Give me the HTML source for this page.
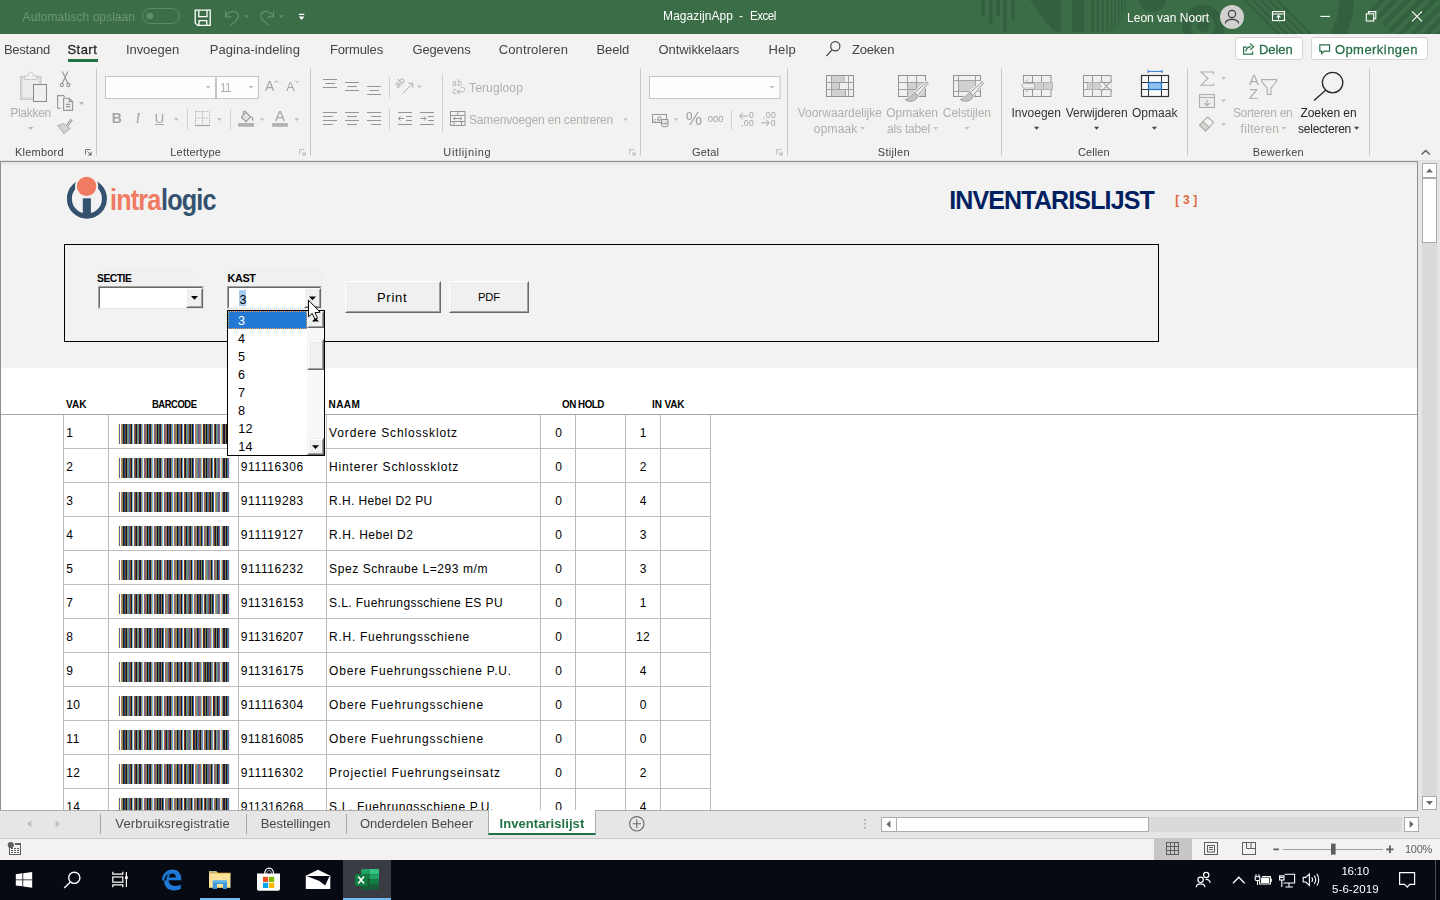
<!DOCTYPE html>
<html lang="nl">
<head>
<meta charset="utf-8">
<title>MagazijnApp - Excel</title>
<style>
html,body{margin:0;padding:0;}
body{width:1440px;height:900px;overflow:hidden;position:relative;background:#f3f2f1;font-family:"Liberation Sans",sans-serif;color:#000;}
.a{position:absolute;}
.t{position:absolute;white-space:pre;line-height:1;font-family:"Liberation Sans",sans-serif;}
svg{position:absolute;overflow:visible;}
.gl{left:0;top:0;width:1440px;height:900px;will-change:transform;pointer-events:none;}
</style>
</head>
<body>
<!-- ===== TITLE BAR ===== -->
<div class="a" style="left:0;top:0;width:1440px;height:34px;background:#3b6e47;overflow:hidden">
<svg width="1440" height="34" viewBox="0 0 1440 34" style="left:0;top:0">
 <defs><clipPath id="tbc"><circle cx="1091" cy="0" r="36.5"/></clipPath><clipPath id="tbr"><path d="M1358 0H1440V34H1392Z"/></clipPath></defs>
 <g fill="#33603f">
  <rect x="981.5" y="0" width="3.5" height="16"/><rect x="989" y="0" width="3.5" height="23"/>
  <rect x="996.5" y="0" width="3.5" height="16"/><rect x="1003" y="0" width="4" height="32"/>
  <rect x="1011" y="0" width="3.7" height="20"/>
  <path d="M1030 0 L1048 25 L1048 0 Z"/>
  <path d="M1048 0 H1061 V32 H1058 Q1049 30 1048 22 Z"/>
  <rect x="1071.7" y="0" width="12.5" height="32"/>
  <g clip-path="url(#tbc)"><path d="M1091 0h3v32h-3z M1096.3 0h2.8v32h-2.8z M1101.8 0h2.2v32h-2.2z M1106.4 0h2v32h-2z M1110.5 0h1.8v32h-1.8z M1114.3 0h1.7v32h-1.7z M1117.8 0h1.6v32h-1.6z M1121.2 0h1.5v32h-1.5z M1124.4 0h1.4v32h-1.4z M1127.2 0h1.2v32h-1.2z"/></g>
  <circle cx="1152.5" cy="-2" r="14"/>
  <circle cx="1203" cy="26" r="16.5" fill="none" stroke="#33603f" stroke-width="9"/>
  <circle cx="1203" cy="26" r="6"/>
  <path d="M1243 0h3.6l34 34h-3.6z M1251 0h3.6l34 34h-3.6z M1259 0h3.6l34 34h-3.6z M1267 0h3.6l34 34h-3.6z M1275 0h3.6l34 34h-3.6z "/>
  <path d="M1339.3 0H1354A76.6 76.6 0 0 1 1347 32V34H1329.6A61.9 61.9 0 0 0 1339.3 0Z"/>
  <g clip-path="url(#tbr)"><path d="M1379 0h6.5l-34 34h-6.5z M1392 0h6.5l-34 34h-6.5z M1405 0h6.5l-34 34h-6.5z M1418 0h6.5l-34 34h-6.5z M1431 0h6.5l-34 34h-6.5z M1444 0h6.5l-34 34h-6.5z M1457 0h6.5l-34 34h-6.5z M1470 0h6.5l-34 34h-6.5z "/></g>
 </g>
 <!-- autosave toggle -->
 <rect x="142.5" y="8.5" width="37" height="15" rx="7.5" fill="none" stroke="#5c8b68" stroke-width="1"/>
 <circle cx="150" cy="16" r="3.3" fill="#5f8d6b"/>
 <!-- save -->
 <g fill="none" stroke="#fff" stroke-width="1.3">
  <path d="M195.2 10.2 H210.2 V25.4 H197.6 L195.2 23 Z"/>
  <path d="M198.8 10.2 V16.6 H207 V10.2"/>
  <path d="M199 25.4 V20.6 H206.8 V25.4"/>
 </g>
 <!-- undo -->
 <g fill="none" stroke="#628f6e" stroke-width="1.2">
  <path d="M225.6 10.8 V16.8 H231.6"/>
  <path d="M225.8 16.6 C228 11 236 9.5 238.2 14.5 C239.6 18.5 235 21.5 230.4 25.6"/>
  <path d="M273.6 10.8 V16.8 H267.6"/>
  <path d="M273.4 16.6 C271.2 11 263.2 9.5 261 14.5 C259.6 18.5 264.2 21.5 268.8 25.6"/>
 </g>
 <path d="M244 15.2 h4.8 l-2.4 2.8z M279 15.2 h4.8 l-2.4 2.8z" fill="#628f6e"/>
 <!-- customize QAT -->
 <path d="M298.9 13.8 h5.4 v1.1 h-5.4z M298.7 16.6 h5.8 l-2.9 3.4z" fill="#fff"/>
 <!-- avatar -->
 <circle cx="1232" cy="17" r="12" fill="#d2d0ce"/>
 <g fill="none" stroke="#3b3a39" stroke-width="1.1">
  <circle cx="1232" cy="14" r="3.6"/>
  <path d="M1225.4 23.5 C1226 18 1238 18 1238.6 23.5"/>
 </g>
 <!-- ribbon display options -->
 <g fill="none" stroke="#fff" stroke-width="1.1">
  <rect x="1272.5" y="11.6" width="12" height="9"/>
  <path d="M1272.5 14 H1284.5"/>
  <path d="M1278.5 19.5 V15.6 M1276.6 17.4 L1278.5 15.5 L1280.4 17.4"/>
  <!-- minimize -->
  <path d="M1320.4 16.4 H1330"/>
  <!-- restore -->
  <rect x="1366.3" y="13.8" width="7.4" height="7.2"/>
  <path d="M1368.6 13.8 V11.6 H1375.8 V18.8 H1373.7"/>
  <!-- close -->
  <path d="M1412 11.4 L1422 21.4 M1422 11.4 L1412 21.4"/>
 </g>
</svg>
<div class="a gl">
<span class="t" style="left:22.62px;top:11.00px;font-size:12px;letter-spacing:0.055px;color:#6d9878;">Automatisch opslaan</span>
<span class="t" style="left:663.12px;top:10.00px;font-size:12px;letter-spacing:0.035px;color:#fff;">MagazijnApp</span>
<span class="t" style="left:739.12px;top:10.00px;font-size:12px;letter-spacing:0.560px;color:#fff;">-</span>
<span class="t" style="left:750.22px;top:10.00px;font-size:12px;letter-spacing:-0.540px;transform:scaleX(0.9668);transform-origin:0 0;color:#fff;">Excel</span>
<span class="t" style="left:1127.02px;top:12.00px;font-size:12px;letter-spacing:0.007px;color:#fff;">Leon van Noort</span>
</div>
</div>
<!-- ===== RIBBON ===== -->
<div class="a" style="left:0;top:34px;width:1440px;height:127px;background:#f3f2f1"></div>
<div class="a" style="left:0;top:160px;width:1440px;height:1px;background:#e3e1df"></div>
<div class="a" style="left:68px;top:59px;width:30px;height:3px;background:#217346"></div>
<div class="a" style="left:1235px;top:37px;width:68px;height:23px;background:#fff;border:1px solid #d6d4d2;border-radius:3px;box-sizing:border-box"></div>
<div class="a" style="left:1311px;top:37px;width:117px;height:23px;background:#fff;border:1px solid #d6d4d2;border-radius:3px;box-sizing:border-box"></div>
<div class="a gl">
<span class="t" style="left:3.88px;top:43.00px;font-size:13px;letter-spacing:-0.238px;color:#444;">Bestand</span>
<span class="t" style="left:67.48px;top:43.00px;font-size:13px;letter-spacing:0.454px;color:#262626;-webkit-text-stroke:0.3px #262626;">Start</span>
<span class="t" style="left:125.88px;top:43.00px;font-size:13px;letter-spacing:-0.033px;color:#444;">Invoegen</span>
<span class="t" style="left:209.78px;top:43.00px;font-size:13px;letter-spacing:0.034px;color:#444;">Pagina-indeling</span>
<span class="t" style="left:329.98px;top:43.00px;font-size:13px;letter-spacing:-0.143px;color:#444;">Formules</span>
<span class="t" style="left:412.48px;top:43.00px;font-size:13px;letter-spacing:-0.153px;color:#444;">Gegevens</span>
<span class="t" style="left:498.68px;top:43.00px;font-size:13px;letter-spacing:0.128px;color:#444;">Controleren</span>
<span class="t" style="left:596.48px;top:43.00px;font-size:13px;letter-spacing:-0.122px;color:#444;">Beeld</span>
<span class="t" style="left:658.48px;top:43.00px;font-size:13px;letter-spacing:-0.062px;color:#444;">Ontwikkelaars</span>
<span class="t" style="left:768.48px;top:43.00px;font-size:13px;letter-spacing:0.197px;color:#444;">Help</span>
<span class="t" style="left:851.98px;top:43.00px;font-size:13px;letter-spacing:-0.189px;color:#444;">Zoeken</span>
<span class="t" style="left:1258.88px;top:43.00px;font-size:13px;letter-spacing:-0.006px;color:#2b7048;-webkit-text-stroke:0.3px #2b7048;">Delen</span>
<span class="t" style="left:1334.88px;top:43.00px;font-size:13px;letter-spacing:0.454px;color:#2b7048;-webkit-text-stroke:0.3px #2b7048;">Opmerkingen</span>
</div>
<!-- group labels -->
<div class="a gl">
<span class="t" style="left:15.06px;top:147.00px;font-size:11px;letter-spacing:0.200px;color:#444;">Klembord</span>
<span class="t" style="left:170.26px;top:147.00px;font-size:11px;letter-spacing:0.196px;color:#444;">Lettertype</span>
<span class="t" style="left:443.36px;top:147.00px;font-size:11px;letter-spacing:0.630px;color:#444;">Uitlijning</span>
<span class="t" style="left:692.06px;top:147.00px;font-size:11px;letter-spacing:0.177px;color:#444;">Getal</span>
<span class="t" style="left:877.86px;top:147.00px;font-size:11px;letter-spacing:0.302px;color:#444;">Stijlen</span>
<span class="t" style="left:1077.96px;top:147.00px;font-size:11px;letter-spacing:0.115px;color:#444;">Cellen</span>
<span class="t" style="left:1252.76px;top:147.00px;font-size:11px;letter-spacing:0.295px;color:#444;">Bewerken</span>
</div>
<!-- button labels -->
<div class="a gl">
<span class="t" style="left:10.32px;top:107.00px;font-size:12px;letter-spacing:-0.306px;color:#b1afad;">Plakken</span>
<span class="t" style="left:469.02px;top:82.00px;font-size:12px;letter-spacing:0.138px;color:#b1afad;">Terugloop</span>
<span class="t" style="left:469.02px;top:114.00px;font-size:12px;letter-spacing:-0.173px;color:#b1afad;">Samenvoegen en centreren</span>
<span class="t" style="left:797.82px;top:107.00px;font-size:12px;letter-spacing:-0.051px;color:#b1afad;">Voorwaardelijke</span>
<span class="t" style="left:813.82px;top:123.00px;font-size:12px;letter-spacing:0.159px;color:#b1afad;">opmaak</span>
<span class="t" style="left:886.32px;top:107.00px;font-size:12px;letter-spacing:-0.053px;color:#b1afad;">Opmaken</span>
<span class="t" style="left:887.02px;top:123.00px;font-size:12px;letter-spacing:-0.194px;color:#b1afad;">als tabel</span>
<span class="t" style="left:942.82px;top:107.00px;font-size:12px;letter-spacing:-0.053px;color:#b1afad;">Celstijlen</span>
<span class="t" style="left:1011.52px;top:107.00px;font-size:12px;letter-spacing:0.009px;color:#333;">Invoegen</span>
<span class="t" style="left:1065.82px;top:107.00px;font-size:12px;letter-spacing:-0.095px;color:#333;">Verwijderen</span>
<span class="t" style="left:1131.92px;top:107.00px;font-size:12px;letter-spacing:0.033px;color:#333;">Opmaak</span>
<span class="t" style="left:1232.92px;top:107.00px;font-size:12px;letter-spacing:-0.287px;color:#b1afad;">Sorteren en</span>
<span class="t" style="left:1240.52px;top:123.00px;font-size:12px;letter-spacing:0.329px;color:#b1afad;">filteren</span>
<span class="t" style="left:1300.52px;top:107.00px;font-size:12px;letter-spacing:-0.084px;color:#262626;">Zoeken en</span>
<span class="t" style="left:1298.02px;top:123.00px;font-size:12px;letter-spacing:-0.232px;color:#262626;">selecteren</span>
</div>
<!-- font group glyph buttons -->
<div class="a gl">
<span class="t" style="left:111.84px;top:111.00px;font-size:14px;letter-spacing:-1.205px;color:#a6a4a2;font-weight:bold;">B</span>
<span class="t" style="left:135.44px;top:112.00px;font-size:14px;letter-spacing:1.448px;color:#a6a4a2;font-style:italic;font-family:Liberation Serif,serif;">I</span>
<span class="t" style="left:154.68px;top:112.00px;font-size:13px;letter-spacing:0.049px;color:#a6a4a2;">U</span>
<span class="t" style="left:265.04px;top:79.00px;font-size:14px;letter-spacing:0.676px;color:#a6a4a2;">A</span>
<span class="t" style="left:286.30px;top:81.00px;font-size:12.5px;letter-spacing:0.456px;color:#a6a4a2;">A</span>
<span class="t" style="left:275.00px;top:108.00px;font-size:15px;letter-spacing:0.984px;color:#a6a4a2;">A</span>
<span class="t" style="left:685.66px;top:110.00px;font-size:18.5px;letter-spacing:0.227px;color:#a6a4a2;">%</span>
<span class="t" style="left:707.82px;top:114.00px;font-size:9.4px;letter-spacing:0.065px;color:#a6a4a2;">000</span>
</div>
<svg width="1440" height="165" viewBox="0 0 1440 165" style="left:0;top:0">
 <!-- group separators -->
 <g stroke="#c8c6c4" stroke-width="1" fill="none">
  <path d="M96.5 68.5V155.5 M310.5 68.5V155.5 M640.5 68.5V155.5 M787.5 68.5V155.5 M1001.5 68.5V155.5 M1187.5 68.5V155.5 M1369.5 68.5V155.5"/>
  <path d="M187.5 109V129.5 M230.5 109V129.5 M389.5 77V97.5 M389.5 109V129.5 M442.5 74.5V132.5 M731.5 109.5V129.5" stroke="#d2d0ce"/>
 </g>
 <!-- dialog launchers -->
 <path d="M85.5 154.5V149.5H90.5 M87.4 151.4L90 154" stroke="#7a7876" stroke-width="1" fill="none"/><path d="M91.6 151.6V155.6H87.6Z" fill="#7a7876"/><path d="M299.5 154.5V149.5H304.5 M301.4 151.4L304 154" stroke="#c2c0be" stroke-width="1" fill="none"/><path d="M305.6 151.6V155.6H301.6Z" fill="#c2c0be"/><path d="M629.5 154.5V149.5H634.5 M631.4 151.4L634 154" stroke="#c2c0be" stroke-width="1" fill="none"/><path d="M635.6 151.6V155.6H631.6Z" fill="#c2c0be"/><path d="M776.5 154.5V149.5H781.5 M778.4 151.4L781 154" stroke="#c2c0be" stroke-width="1" fill="none"/><path d="M782.6 151.6V155.6H778.6Z" fill="#c2c0be"/>
 <!-- search icon (tab row) -->
 <g stroke="#444" stroke-width="1.2" fill="none"><circle cx="835.3" cy="46.2" r="4.6"/><path d="M832 49.8L826.4 56"/></g>
 <!-- share + comment icons -->
 <g stroke="#2b7048" stroke-width="1.2" fill="none">
  <path d="M1246.8 47.2H1243.6V54.2H1252.6V51.4"/>
  <path d="M1245.8 51.6C1246.2 48.4 1248.4 46.8 1251 46.6 M1250.2 43.8L1253.6 46.8L1250.2 49.8"/>
  <path d="M1319.8 44.8H1329.6V51.2H1324.2L1321.6 53.6V51.2H1319.8Z"/>
 </g>
 <!-- collapse ribbon caret -->
 <path d="M1421.6 154.6L1425.7 150.4L1429.8 154.6" stroke="#605e5c" stroke-width="1.4" fill="none"/>

 <!-- ===== Klembord ===== -->
 <rect x="20.5" y="76.5" width="20.5" height="23" fill="#dedede" stroke="#c6c6c6"/>
 <rect x="23" y="79" width="15.5" height="18" fill="#ededed"/>
 <path d="M24.5 79.5V76H28C28 70.8 33.5 70.8 33.5 76H36.8V79.5Z" fill="#f3f2f1" stroke="#c6c6c6"/>
 <rect x="33.5" y="84.5" width="13" height="17" fill="#efefef" stroke="#8a8886"/>
 <path d="M28.2 127h5l-2.5 2.9z M79 102h5l-2.5 2.9z" fill="#b8b6b4"/>
 <g stroke="#979593" stroke-width="1.1" fill="none">
  <path d="M62.4 71.6L68 83.6 M67.8 71.6L62.2 83.6"/><circle cx="61.8" cy="85" r="1.6"/><circle cx="68.4" cy="85" r="1.6"/>
  <path d="M61 108.3H57.6V95.6H63.6L64.8 96.8" />
  <path d="M63.6 98.2H69.2L72.6 101.6V110.4H63.6Z" fill="#efefef"/><path d="M69.2 98.2V101.6H72.6 M66 104.4H70.4 M66 106.6H70.4"/>
  <path d="M71.6 119.4L67 126" stroke-width="2.6" stroke="#8a8886"/><path d="M71.6 119.4L67 126" stroke-width="1" stroke="#f3f2f1"/>
  <path d="M63.4 123.6L70 128.2L64 133.4L57.8 125.6Z" fill="#d6d4d2" stroke="#b8b6b4"/>
 </g>

 <!-- ===== Lettertype ===== -->
 <rect x="105.5" y="76.5" width="110" height="22" fill="#fdfdfd" stroke="#c8c6c4"/>
 <rect x="216.5" y="76.5" width="42" height="22" fill="#fdfdfd" stroke="#c8c6c4"/>
 <path d="M205.8 86h4.8l-2.4 2.7z M248.6 86h4.8l-2.4 2.7z M173.8 118.2h4.8l-2.4 2.7z M216.9 118.2h4.8l-2.4 2.7z M259.8 118.2h4.8l-2.4 2.7z M294.3 118.2h4.8l-2.4 2.7z" fill="#c2c0be"/>
 <path d="M274.6 82.6L276.4 80.8L278.2 82.6 M295.4 80.8L297.2 82.6L299 80.8" stroke="#a6a4a2" stroke-width="1" fill="none"/>
 <path d="M155 124.5H164" stroke="#a6a4a2" stroke-width="1"/>
 <g stroke="#b8b6b4" stroke-width="1" fill="none" stroke-dasharray="1.5 1.2"><path d="M195.5 111.5H209.5 M195.5 111.5V124 M209.5 111.5V124 M202.5 111.5V124 M195.5 118H209.5"/></g>
 <path d="M195 125.5H210" stroke="#a6a4a2" stroke-width="1.2"/>
 <rect x="238.2" y="123" width="15.8" height="3.8" fill="#b4b2b0"/>
 <rect x="272.2" y="123" width="15.6" height="3.8" fill="#b4b2b0"/>
 <g stroke="#979593" stroke-width="1.1" fill="none"><path d="M241.4 117.2L246 112.2L250.6 116.8L246 121.6Z" fill="#e6e4e2"/><path d="M243.4 114.6V112C243.4 110.6 245.6 110.6 245.6 112 M251.4 116.6C253 118.4 253 119.6 252.2 120.6"/></g>

 <!-- ===== Uitlijning ===== -->
 <g stroke="#979593" stroke-width="1" fill="none">
  <path d="M323 79.5H337 M325.5 83.5H335 M323 87.5H337"/>
  <path d="M345 82.5H359 M347.5 86.5H357 M345 90.5H359"/>
  <path d="M367 86.5H381 M369.5 90.5H379 M367 94.5H381"/>
  <path d="M323 112.5H337 M323 116.5H333 M323 120.5H337 M323 124.5H333"/>
  <path d="M345 112.5H359 M347 116.5H357 M345 120.5H359 M347 124.5H357"/>
  <path d="M367 112.5H381 M371 116.5H381 M367 120.5H381 M371 124.5H381"/>
  <path d="M398 112.5H412 M406 116.5H412 M406 120.5H412 M398 124.5H412 M404 118.5H398.4 M400.6 116.3L398.4 118.5L400.6 120.7"/>
  <path d="M420 112.5H434 M428 116.5H434 M428 120.5H434 M420 124.5H434 M420.4 118.5H426 M423.8 116.3L426 118.5L423.8 120.7"/>
  <path d="M402.8 93.4L412.6 83.4 M408.4 83.2H412.8V87.6" stroke="#b1afad"/>
  <rect x="450.5" y="111.5" width="14.5" height="14"/><path d="M450.5 115.5H465 M450.5 121.5H465 M457.8 111.5V115.5 M454 121.5V125.5 M461.4 121.5V125.5 M453.4 118.5H462 M455.2 116.8L453.4 118.5L455.2 120.2 M460.2 116.8L462 118.5L460.2 120.2"/>
  <path d="M457.4 91.8H462.4C465.6 91.8 465.6 87.4 462.4 87.4H460.8 M459.6 89.6L457.2 91.8L459.6 94" stroke="#b1afad"/>
 </g>
 <path d="M417 85.6h4.8l-2.4 2.7z M623.2 118.2h4.8l-2.4 2.7z" fill="#c2c0be"/>

 <!-- ===== Getal ===== -->
 <rect x="649.5" y="76.5" width="130.5" height="22" fill="#fdfdfd" stroke="#c8c6c4"/>
 <path d="M769.6 86h4.8l-2.4 2.7z M673.8 118.2h4.8l-2.4 2.7z" fill="#c2c0be"/>
 <g stroke="#979593" stroke-width="1" fill="none">
  <rect x="652.5" y="114.5" width="14" height="8"/><circle cx="659.5" cy="118.5" r="1.8"/>
  <path d="M661.5 119.5H668V125.4C668 127.4 661.5 127.4 661.5 125.4Z" fill="#e6e4e2"/><path d="M661.5 122.4C661.5 124 668 124 668 122.4"/>
  <path d="M747.8 116H739.6 M742.8 112.8L739.6 116L742.8 119.2" stroke="#a6a4a2"/>
  <path d="M761 122.8H769.2 M766 119.6L769.2 122.8L766 126" stroke="#a6a4a2"/>
 </g>

 <!-- ===== Stijlen ===== -->
 <g stroke="#939190" stroke-width="1" fill="none">
  <rect x="826.5" y="75.5" width="27" height="21" fill="#f0f0f0"/>
  <path d="M831.8 76H843.2V82H831.8Z M831.8 83H839.4V89H831.8Z M831.8 90H845.2V96H831.8Z" fill="#d2d0ce" stroke="none"/>
  <path d="M831.5 75.5V96.5 M848.5 75.5V96.5 M844 75.5V82.5 M845.5 89.5V96.5 M826.5 82.5H853.5 M826.5 89.5H853.5 M839.5 82.5V89.5" stroke="#a3a1a0"/>
  <rect x="898.5" y="75.5" width="27" height="21" fill="#f0f0f0"/>
  <path d="M908 83H925V96H908Z" fill="#d2d0ce" stroke="none"/>
  <path d="M907.5 75.5V96.5 M916.5 75.5V96.5 M898.5 82.5H925.5 M898.5 89.5H925.5" stroke="#a3a1a0"/>
  <rect x="953.5" y="75.5" width="27" height="21" fill="#f0f0f0"/>
  <path d="M959 80.5H975.5V91H959Z" fill="#d2d0ce" stroke="none"/>
  <path d="M958.5 75.5V96.5 M975.5 75.5V96.5 M953.5 80.5H980.5 M953.5 91.5H980.5" stroke="#a3a1a0"/>
 </g>
 <g>
  <path d="M926.9 81.8L928.3 83.1L917.7 95.7L914.7 92.8Z" fill="none" stroke="#f3f2f1" stroke-width="2.6" stroke-linejoin="round"/>
  <path d="M914.6 92.8C911.5 93.5 911.5 98 905.2 99.6C909 102.6 916.6 102 917.9 95.6Z" fill="none" stroke="#f3f2f1" stroke-width="2.2"/>
  <path d="M926.9 81.8L928.3 83.1L917.7 95.7L914.7 92.8Z" fill="#ededed" stroke="#8f8d8b" stroke-width="0.9" stroke-linejoin="round"/>
  <path d="M914.6 92.8C911.5 93.5 911.5 98 905.2 99.6C909 102.6 916.6 102 917.9 95.6Z" fill="#c6c4c2" stroke="#9a9896" stroke-width="0.9"/>
  <g transform="translate(55.2 0)"><path d="M926.9 81.8L928.3 83.1L917.7 95.7L914.7 92.8Z" fill="none" stroke="#f3f2f1" stroke-width="2.6" stroke-linejoin="round"/>
  <path d="M914.6 92.8C911.5 93.5 911.5 98 905.2 99.6C909 102.6 916.6 102 917.9 95.6Z" fill="none" stroke="#f3f2f1" stroke-width="2.2"/>
  <path d="M926.9 81.8L928.3 83.1L917.7 95.7L914.7 92.8Z" fill="#ededed" stroke="#8f8d8b" stroke-width="0.9" stroke-linejoin="round"/>
  <path d="M914.6 92.8C911.5 93.5 911.5 98 905.2 99.6C909 102.6 916.6 102 917.9 95.6Z" fill="#c6c4c2" stroke="#9a9896" stroke-width="0.9"/></g>
 </g>
 <path d="M860.2 127h4.8l-2.4 2.7z M933.2 127h4.8l-2.4 2.7z M964.6 127h4.8l-2.4 2.7z M1281.2 127h4.8l-2.4 2.7z M1221.2 77h4.8l-2.4 2.7z M1221.2 99.6h4.8l-2.4 2.7z M1221.2 123.2h4.8l-2.4 2.7z" fill="#c2c0be"/>
 <path d="M1034 126.8h5.2l-2.6 3z M1094 126.8h5.2l-2.6 3z M1151.8 126.8h5.2l-2.6 3z M1354 126.8h5.2l-2.6 3z" fill="#444"/>

 <!-- ===== Cellen ===== -->
 <g stroke="#979593" stroke-width="1" fill="none">
  <rect x="1023.5" y="75.5" width="27.5" height="21" fill="#efefef"/>
  <path d="M1032.5 75.5V96.5 M1041.5 75.5V96.5 M1023.5 82.5H1051 M1023.5 89.5H1051"/>
  <rect x="1034.5" y="82.5" width="18" height="7" fill="#d2d0ce" stroke="#b8b6b4"/><path d="M1043.5 82.5V89.5" stroke="#b8b6b4"/>
  <path d="M1022.6 83H1034V89H1022.6Z" fill="#f3f2f1" stroke="none"/><path d="M1028 79.4L1021.6 85.8L1028 92.2 M1024.4 83.6H1034.4 M1024.4 88H1034.4" stroke="#c2c0be" stroke-width="1.2"/>
  <rect x="1083.5" y="75.5" width="27.5" height="21" fill="#efefef"/>
  <path d="M1092.5 75.5V82.5 M1101.5 75.5V82.5 M1092.5 89.5V96.5 M1101.5 89.5V96.5 M1083.5 82.5H1111 M1083.5 89.5H1111"/>
  <path d="M1084 83H1111.5V89H1084Z" fill="#f3f2f1" stroke="none"/>
  <path d="M1087.5 82.5H1098L1101.6 86L1098 89.5H1087.5Z" fill="#d2d0ce" stroke="#b8b6b4"/><path d="M1092.5 82.5V89.5" stroke="#b8b6b4"/>
  <path d="M1101 80.4L1112 91.8 M1112 80.4L1101 91.8" stroke="#aeacaa" stroke-width="1.3"/>
 </g>
 <rect x="1141.5" y="75.5" width="27" height="21" fill="#fafafa" stroke="#333" stroke-width="1.2"/>
 <path d="M1148.5 75.5V96.5 M1161.5 75.5V96.5 M1141.5 82.5H1168.5 M1141.5 89.5H1168.5" stroke="#333" stroke-width="1" fill="none"/>
 <rect x="1148.5" y="82.5" width="13" height="7" fill="#8ec2ec" stroke="#1e6fc0" stroke-width="1.2"/>
 <path d="M1148 71.4H1162.2 M1148.2 69.8V73 M1162 69.8V73" stroke="#2b7cd3" stroke-width="1" fill="none"/>

 <!-- ===== Bewerken ===== -->
 <g stroke="#a19f9d" stroke-width="1.1" fill="none">
  <path d="M1213.6 74V72H1201L1208 78.6L1201 85.2H1213.6V83.2" stroke="#b1afad"/>
  <rect x="1199.5" y="94.5" width="15" height="13" fill="#ececec" stroke="#b1afad"/><path d="M1199.5 97.5H1214.5 M1207 99.6V105.4 M1204.4 103L1207 105.6L1209.6 103" stroke="#b1afad"/>
  <path d="M1207.6 117L1213.8 122.6L1205.6 131L1199.6 125.2Z" fill="#f3f2f1" stroke="#b1afad"/><path d="M1203 121.6L1209.2 127.2L1205.6 131L1199.6 125.2Z" fill="#d6d4d2" stroke="#b1afad"/>
  <path d="M1261.6 79.6H1276.6V81.4L1271 88.2V94.4H1267.2V88.2L1261.6 81.4Z" stroke="#b1afad"/>
 </g>
 <g stroke="#262626" stroke-width="1.3" fill="none"><circle cx="1332.6" cy="82.6" r="10.2"/><path d="M1325.6 90.2L1314 100.6"/></g>
</svg>
<div class="a gl">
<span class="t" style="left:219.52px;top:82.00px;font-size:12px;letter-spacing:-0.540px;transform:scaleX(0.9624);transform-origin:0 0;color:#b1afad;">11</span>
<span class="t" style="left:1249.00px;top:72.00px;font-size:15px;letter-spacing:0.384px;color:#b1afad;">A</span>
<span class="t" style="left:1248.78px;top:86.00px;font-size:15.5px;letter-spacing:0.471px;color:#b1afad;">Z</span>
<span class="t" style="left:398.6px;top:80.2px;font-size:9.5px;color:#a6a4a2;transform:rotate(-45deg);transform-origin:0 100%;">ab</span>
<span class="t" style="left:452.06px;top:79.00px;font-size:8.5px;letter-spacing:0.406px;color:#b1afad;">ab</span>
<span class="t" style="left:452.46px;top:87.00px;font-size:8.5px;letter-spacing:0.630px;color:#b1afad;">c</span>
<span class="t" style="left:653.36px;top:117.00px;font-size:6px;letter-spacing:0.268px;color:#979593;">cn</span>
<span class="t" style="left:749.05px;top:111.00px;font-size:8.7px;letter-spacing:0.352px;color:#a6a4a2;">0</span>
<span class="t" style="left:741.05px;top:119.00px;font-size:8.7px;letter-spacing:0.373px;color:#a6a4a2;">,00</span>
<span class="t" style="left:762.85px;top:111.00px;font-size:8.7px;letter-spacing:0.406px;color:#a6a4a2;">,00</span>
<span class="t" style="left:770.85px;top:119.00px;font-size:8.7px;letter-spacing:0.452px;color:#a6a4a2;">0</span>
</div>
<!-- ===== SHEET ===== -->
<div class="a" style="left:0;top:161px;width:1440px;height:649px;background:#e6e6e6"></div>
<div class="a" id="sheet" style="left:0;top:161px;width:1418px;height:649px;background:#fff;overflow:hidden">
<div class="a" style="left:0;top:0;width:1418px;height:207px;background:#f2f2f2"></div>
<div class="a" style="left:0;top:1px;width:1418px;height:4px;background:linear-gradient(#e4e4e4,#f2f2f2)"></div>
</div>
<div class="a" style="left:0;top:0;width:1417px;height:810px;overflow:hidden">
<div class="a" style="left:1px;top:414px;width:1416px;height:1px;background:#a6a6a6"></div>
<div class="a" style="left:63px;top:415px;width:1px;height:395px;background:#bdbdbd"></div>
<div class="a" style="left:108px;top:415px;width:1px;height:395px;background:#bdbdbd"></div>
<div class="a" style="left:238px;top:415px;width:1px;height:395px;background:#bdbdbd"></div>
<div class="a" style="left:326px;top:415px;width:1px;height:395px;background:#bdbdbd"></div>
<div class="a" style="left:540px;top:415px;width:1px;height:395px;background:#bdbdbd"></div>
<div class="a" style="left:575px;top:415px;width:1px;height:395px;background:#bdbdbd"></div>
<div class="a" style="left:625px;top:415px;width:1px;height:395px;background:#bdbdbd"></div>
<div class="a" style="left:660px;top:415px;width:1px;height:395px;background:#bdbdbd"></div>
<div class="a" style="left:710px;top:415px;width:1px;height:395px;background:#bdbdbd"></div>
<div class="a" style="left:63px;top:448px;width:648px;height:1px;background:#bdbdbd"></div>
<div class="a" style="left:63px;top:482px;width:648px;height:1px;background:#bdbdbd"></div>
<div class="a" style="left:63px;top:516px;width:648px;height:1px;background:#bdbdbd"></div>
<div class="a" style="left:63px;top:550px;width:648px;height:1px;background:#bdbdbd"></div>
<div class="a" style="left:63px;top:584px;width:648px;height:1px;background:#bdbdbd"></div>
<div class="a" style="left:63px;top:618px;width:648px;height:1px;background:#bdbdbd"></div>
<div class="a" style="left:63px;top:652px;width:648px;height:1px;background:#bdbdbd"></div>
<div class="a" style="left:63px;top:686px;width:648px;height:1px;background:#bdbdbd"></div>
<div class="a" style="left:63px;top:720px;width:648px;height:1px;background:#bdbdbd"></div>
<div class="a" style="left:63px;top:754px;width:648px;height:1px;background:#bdbdbd"></div>
<div class="a" style="left:63px;top:788px;width:648px;height:1px;background:#bdbdbd"></div>
<span class="t" style="left:66.00px;top:400.00px;font-size:10px;letter-spacing:0.042px;font-weight:bold;color:#000;">VAK</span>
<span class="t" style="left:151.60px;top:400.00px;font-size:10px;letter-spacing:-0.450px;transform:scaleX(0.9407);transform-origin:0 0;font-weight:bold;color:#000;">BARCODE</span>
<span class="t" style="left:328.60px;top:400.00px;font-size:10px;letter-spacing:0.375px;font-weight:bold;color:#000;">NAAM</span>
<span class="t" style="left:561.80px;top:400.00px;font-size:10px;letter-spacing:-0.450px;transform:scaleX(0.9753);transform-origin:0 0;font-weight:bold;color:#000;">ON HOLD</span>
<span class="t" style="left:652.10px;top:400.00px;font-size:10px;letter-spacing:-0.159px;font-weight:bold;color:#000;">IN VAK</span>
<span class="t" style="left:66.22px;top:427.00px;font-size:12px;letter-spacing:0.372px;">1</span>
<svg width="1440" height="900" viewBox="0 0 1440 900" style="left:0;top:0" shape-rendering="crispEdges"><path fill="#fff0a8" d="M118 424h1v20h-1zM133 424h1v20h-1zM202 424h1v20h-1z"/><path fill="#6060a8" d="M119 424h1v20h-1z"/><path fill="#c09060" d="M121 424h1v20h-1z"/><path fill="#789060" d="M122 424h1v20h-1zM171 424h1v20h-1zM186 424h1v20h-1z"/><path fill="#301818" d="M123 424h1v20h-1z"/><path fill="#184890" d="M124 424h1v20h-1z"/><path fill="#784818" d="M125 424h1v20h-1zM130 424h1v20h-1zM135 424h1v20h-1zM209 424h1v20h-1z"/><path fill="#181830" d="M126 424h1v20h-1zM131 424h1v20h-1zM136 424h1v20h-1zM210 424h1v20h-1zM215 424h1v20h-1z"/><path fill="#789078" d="M127 424h1v20h-1zM137 424h1v20h-1zM211 424h1v20h-1zM216 424h1v20h-1z"/><path fill="#609090" d="M128 424h1v20h-1zM138 424h1v20h-1zM187 424h1v20h-1zM197 424h1v20h-1zM217 424h1v20h-1zM222 424h1v20h-1z"/><path fill="#606090" d="M129 424h1v20h-1zM134 424h1v20h-1zM198 424h1v20h-1zM208 424h1v20h-1zM218 424h1v20h-1z"/><path fill="#78c0f0" d="M132 424h1v20h-1zM142 424h1v20h-1zM152 424h1v20h-1zM162 424h1v20h-1z"/><path fill="#481818" d="M139 424h1v20h-1zM223 424h1v20h-1z"/><path fill="#181848" d="M140 424h1v20h-1zM150 424h1v20h-1zM160 424h1v20h-1zM170 424h1v20h-1zM185 424h1v20h-1zM190 424h1v20h-1zM224 424h1v20h-1z"/><path fill="#909060" d="M141 424h1v20h-1zM151 424h1v20h-1zM161 424h1v20h-1z"/><path fill="#fff0c0" d="M143 424h1v20h-1zM153 424h1v20h-1zM163 424h1v20h-1zM173 424h1v20h-1zM183 424h1v20h-1z"/><path fill="#786090" d="M144 424h1v20h-1zM154 424h1v20h-1zM164 424h1v20h-1zM228 424h1v20h-1z"/><path fill="#906060" d="M145 424h1v20h-1zM155 424h1v20h-1zM165 424h1v20h-1z"/><path fill="#907848" d="M146 424h1v20h-1zM156 424h1v20h-1zM166 424h1v20h-1zM225 424h1v20h-1z"/><path fill="#181818" d="M147 424h1v20h-1zM157 424h1v20h-1zM167 424h1v20h-1zM177 424h1v20h-1zM181 424h1v20h-1zM192 424h1v20h-1zM206 424h1v20h-1zM226 424h1v20h-1z"/><path fill="#307890" d="M148 424h1v20h-1zM158 424h1v20h-1zM227 424h1v20h-1z"/><path fill="#603018" d="M149 424h1v20h-1zM159 424h1v20h-1z"/><path fill="#306090" d="M168 424h1v20h-1zM178 424h1v20h-1z"/><path fill="#783018" d="M169 424h1v20h-1zM184 424h1v20h-1zM189 424h1v20h-1z"/><path fill="#60a8f0" d="M172 424h1v20h-1zM182 424h1v20h-1z"/><path fill="#906078" d="M174 424h1v20h-1zM199 424h1v20h-1zM219 424h1v20h-1z"/><path fill="#907860" d="M175 424h1v20h-1zM200 424h1v20h-1z"/><path fill="#909048" d="M176 424h1v20h-1z"/><path fill="#786078" d="M179 424h1v20h-1z"/><path fill="#906030" d="M180 424h1v20h-1z"/><path fill="#607890" d="M188 424h1v20h-1z"/><path fill="#789048" d="M191 424h1v20h-1z"/><path fill="#3060c0" d="M193 424h1v20h-1z"/><path fill="#c07860" d="M195 424h1v20h-1z"/><path fill="#909078" d="M196 424h1v20h-1z"/><path fill="#90c0f0" d="M201 424h1v20h-1z"/><path fill="#601818" d="M203 424h1v20h-1z"/><path fill="#183060" d="M204 424h1v20h-1z"/><path fill="#907830" d="M205 424h1v20h-1z"/><path fill="#487890" d="M207 424h1v20h-1z"/><path fill="#6090d8" d="M212 424h1v20h-1z"/><path fill="#f0f0d8" d="M213 424h1v20h-1z"/><path fill="#904818" d="M214 424h1v20h-1z"/><path fill="#c0f0ff" d="M220 424h1v20h-1z"/><path fill="#f0c078" d="M221 424h1v20h-1z"/><path fill="#d8f0ff" d="M229 424h1v20h-1z"/></svg>
<span class="t" style="left:329.12px;top:427.00px;font-size:12px;letter-spacing:0.840px;">Vordere Schlossklotz</span>
<span class="t" style="left:555.32px;top:427.00px;font-size:12px;letter-spacing:0.272px;">0</span>
<span class="t" style="left:639.72px;top:427.00px;font-size:12px;letter-spacing:0.272px;">1</span>
<span class="t" style="left:66.22px;top:461.00px;font-size:12px;letter-spacing:0.372px;">2</span>
<svg width="1440" height="900" viewBox="0 0 1440 900" style="left:0;top:0" shape-rendering="crispEdges"><path fill="#fff0a8" d="M118 458h1v20h-1zM133 458h1v20h-1zM202 458h1v20h-1z"/><path fill="#6060a8" d="M119 458h1v20h-1z"/><path fill="#c09060" d="M121 458h1v20h-1z"/><path fill="#789060" d="M122 458h1v20h-1zM171 458h1v20h-1zM186 458h1v20h-1z"/><path fill="#301818" d="M123 458h1v20h-1z"/><path fill="#184890" d="M124 458h1v20h-1z"/><path fill="#784818" d="M125 458h1v20h-1zM130 458h1v20h-1zM135 458h1v20h-1z"/><path fill="#181830" d="M126 458h1v20h-1zM131 458h1v20h-1zM136 458h1v20h-1zM215 458h1v20h-1z"/><path fill="#789078" d="M127 458h1v20h-1zM137 458h1v20h-1zM216 458h1v20h-1z"/><path fill="#609090" d="M128 458h1v20h-1zM138 458h1v20h-1zM187 458h1v20h-1zM197 458h1v20h-1zM217 458h1v20h-1zM222 458h1v20h-1z"/><path fill="#606090" d="M129 458h1v20h-1zM134 458h1v20h-1zM198 458h1v20h-1zM208 458h1v20h-1zM218 458h1v20h-1z"/><path fill="#78c0f0" d="M132 458h1v20h-1zM142 458h1v20h-1zM152 458h1v20h-1zM162 458h1v20h-1z"/><path fill="#481818" d="M139 458h1v20h-1zM223 458h1v20h-1z"/><path fill="#181848" d="M140 458h1v20h-1zM150 458h1v20h-1zM160 458h1v20h-1zM170 458h1v20h-1zM185 458h1v20h-1zM190 458h1v20h-1zM224 458h1v20h-1z"/><path fill="#909060" d="M141 458h1v20h-1zM151 458h1v20h-1zM161 458h1v20h-1z"/><path fill="#fff0c0" d="M143 458h1v20h-1zM153 458h1v20h-1zM163 458h1v20h-1zM173 458h1v20h-1zM183 458h1v20h-1z"/><path fill="#786090" d="M144 458h1v20h-1zM154 458h1v20h-1zM164 458h1v20h-1zM228 458h1v20h-1z"/><path fill="#906060" d="M145 458h1v20h-1zM155 458h1v20h-1zM165 458h1v20h-1z"/><path fill="#907848" d="M146 458h1v20h-1zM156 458h1v20h-1zM166 458h1v20h-1zM225 458h1v20h-1z"/><path fill="#181818" d="M147 458h1v20h-1zM157 458h1v20h-1zM167 458h1v20h-1zM177 458h1v20h-1zM181 458h1v20h-1zM192 458h1v20h-1zM206 458h1v20h-1zM211 458h1v20h-1zM226 458h1v20h-1z"/><path fill="#307890" d="M148 458h1v20h-1zM158 458h1v20h-1zM227 458h1v20h-1z"/><path fill="#603018" d="M149 458h1v20h-1zM159 458h1v20h-1z"/><path fill="#306090" d="M168 458h1v20h-1zM178 458h1v20h-1z"/><path fill="#783018" d="M169 458h1v20h-1zM184 458h1v20h-1zM189 458h1v20h-1z"/><path fill="#60a8f0" d="M172 458h1v20h-1zM182 458h1v20h-1z"/><path fill="#906078" d="M174 458h1v20h-1zM199 458h1v20h-1zM209 458h1v20h-1zM219 458h1v20h-1z"/><path fill="#907860" d="M175 458h1v20h-1zM200 458h1v20h-1z"/><path fill="#909048" d="M176 458h1v20h-1z"/><path fill="#786078" d="M179 458h1v20h-1z"/><path fill="#906030" d="M180 458h1v20h-1z"/><path fill="#607890" d="M188 458h1v20h-1z"/><path fill="#789048" d="M191 458h1v20h-1z"/><path fill="#3060c0" d="M193 458h1v20h-1z"/><path fill="#c07860" d="M195 458h1v20h-1z"/><path fill="#909078" d="M196 458h1v20h-1z"/><path fill="#90c0f0" d="M201 458h1v20h-1z"/><path fill="#601818" d="M203 458h1v20h-1z"/><path fill="#183060" d="M204 458h1v20h-1z"/><path fill="#907830" d="M205 458h1v20h-1zM210 458h1v20h-1z"/><path fill="#487890" d="M207 458h1v20h-1z"/><path fill="#4890d8" d="M212 458h1v20h-1z"/><path fill="#f0f0d8" d="M213 458h1v20h-1z"/><path fill="#904818" d="M214 458h1v20h-1z"/><path fill="#c0f0ff" d="M220 458h1v20h-1z"/><path fill="#f0c078" d="M221 458h1v20h-1z"/><path fill="#d8f0ff" d="M229 458h1v20h-1z"/></svg>
<span class="t" style="left:240.82px;top:461.00px;font-size:12px;letter-spacing:0.617px;">911116306</span>
<span class="t" style="left:329.12px;top:461.00px;font-size:12px;letter-spacing:0.826px;">Hinterer Schlossklotz</span>
<span class="t" style="left:555.32px;top:461.00px;font-size:12px;letter-spacing:0.272px;">0</span>
<span class="t" style="left:639.72px;top:461.00px;font-size:12px;letter-spacing:0.272px;">2</span>
<span class="t" style="left:66.22px;top:495.00px;font-size:12px;letter-spacing:0.372px;">3</span>
<svg width="1440" height="900" viewBox="0 0 1440 900" style="left:0;top:0" shape-rendering="crispEdges"><path fill="#fff0a8" d="M118 492h1v20h-1zM133 492h1v20h-1z"/><path fill="#6060a8" d="M119 492h1v20h-1z"/><path fill="#c09060" d="M121 492h1v20h-1zM215 492h1v20h-1z"/><path fill="#789060" d="M122 492h1v20h-1zM171 492h1v20h-1zM211 492h1v20h-1z"/><path fill="#301818" d="M123 492h1v20h-1zM197 492h1v20h-1zM212 492h1v20h-1z"/><path fill="#184890" d="M124 492h1v20h-1zM198 492h1v20h-1z"/><path fill="#784818" d="M125 492h1v20h-1zM130 492h1v20h-1zM135 492h1v20h-1zM199 492h1v20h-1zM209 492h1v20h-1z"/><path fill="#181830" d="M126 492h1v20h-1zM131 492h1v20h-1zM136 492h1v20h-1zM200 492h1v20h-1zM210 492h1v20h-1z"/><path fill="#789078" d="M127 492h1v20h-1zM137 492h1v20h-1zM201 492h1v20h-1zM216 492h1v20h-1z"/><path fill="#609090" d="M128 492h1v20h-1zM138 492h1v20h-1zM217 492h1v20h-1zM222 492h1v20h-1z"/><path fill="#606090" d="M129 492h1v20h-1zM134 492h1v20h-1zM208 492h1v20h-1zM218 492h1v20h-1z"/><path fill="#78c0f0" d="M132 492h1v20h-1zM142 492h1v20h-1zM152 492h1v20h-1zM162 492h1v20h-1z"/><path fill="#481818" d="M139 492h1v20h-1zM223 492h1v20h-1z"/><path fill="#181848" d="M140 492h1v20h-1zM150 492h1v20h-1zM160 492h1v20h-1zM170 492h1v20h-1zM224 492h1v20h-1z"/><path fill="#909060" d="M141 492h1v20h-1zM151 492h1v20h-1zM161 492h1v20h-1zM196 492h1v20h-1z"/><path fill="#fff0c0" d="M143 492h1v20h-1zM153 492h1v20h-1zM163 492h1v20h-1zM173 492h1v20h-1zM183 492h1v20h-1zM193 492h1v20h-1z"/><path fill="#786090" d="M144 492h1v20h-1zM154 492h1v20h-1zM164 492h1v20h-1zM228 492h1v20h-1z"/><path fill="#906060" d="M145 492h1v20h-1zM155 492h1v20h-1zM165 492h1v20h-1z"/><path fill="#907848" d="M146 492h1v20h-1zM156 492h1v20h-1zM166 492h1v20h-1zM225 492h1v20h-1z"/><path fill="#181818" d="M147 492h1v20h-1zM157 492h1v20h-1zM167 492h1v20h-1zM177 492h1v20h-1zM181 492h1v20h-1zM186 492h1v20h-1zM191 492h1v20h-1zM206 492h1v20h-1zM226 492h1v20h-1z"/><path fill="#307890" d="M148 492h1v20h-1zM158 492h1v20h-1zM227 492h1v20h-1z"/><path fill="#603018" d="M149 492h1v20h-1zM159 492h1v20h-1z"/><path fill="#306090" d="M168 492h1v20h-1zM178 492h1v20h-1z"/><path fill="#783018" d="M169 492h1v20h-1z"/><path fill="#60a8f0" d="M172 492h1v20h-1zM182 492h1v20h-1zM192 492h1v20h-1z"/><path fill="#906078" d="M174 492h1v20h-1zM184 492h1v20h-1zM194 492h1v20h-1zM204 492h1v20h-1zM219 492h1v20h-1z"/><path fill="#907860" d="M175 492h1v20h-1zM195 492h1v20h-1z"/><path fill="#909048" d="M176 492h1v20h-1z"/><path fill="#786078" d="M179 492h1v20h-1zM189 492h1v20h-1z"/><path fill="#906030" d="M180 492h1v20h-1zM185 492h1v20h-1zM190 492h1v20h-1z"/><path fill="#489090" d="M187 492h1v20h-1z"/><path fill="#607890" d="M188 492h1v20h-1z"/><path fill="#6090d8" d="M202 492h1v20h-1z"/><path fill="#f0f0d8" d="M203 492h1v20h-1z"/><path fill="#907830" d="M205 492h1v20h-1z"/><path fill="#487890" d="M207 492h1v20h-1z"/><path fill="#1860a8" d="M213 492h1v20h-1z"/><path fill="#c0f0ff" d="M220 492h1v20h-1z"/><path fill="#f0c078" d="M221 492h1v20h-1z"/><path fill="#d8f0ff" d="M229 492h1v20h-1z"/></svg>
<span class="t" style="left:240.82px;top:495.00px;font-size:12px;letter-spacing:0.617px;">911119283</span>
<span class="t" style="left:329.12px;top:495.00px;font-size:12px;letter-spacing:0.387px;">R.H. Hebel D2 PU</span>
<span class="t" style="left:555.32px;top:495.00px;font-size:12px;letter-spacing:0.272px;">0</span>
<span class="t" style="left:639.72px;top:495.00px;font-size:12px;letter-spacing:0.272px;">4</span>
<span class="t" style="left:66.22px;top:529.00px;font-size:12px;letter-spacing:0.372px;">4</span>
<svg width="1440" height="900" viewBox="0 0 1440 900" style="left:0;top:0" shape-rendering="crispEdges"><path fill="#fff0a8" d="M118 526h1v20h-1zM133 526h1v20h-1zM212 526h1v20h-1z"/><path fill="#6060a8" d="M119 526h1v20h-1z"/><path fill="#c09060" d="M121 526h1v20h-1z"/><path fill="#789060" d="M122 526h1v20h-1zM171 526h1v20h-1zM191 526h1v20h-1zM206 526h1v20h-1zM216 526h1v20h-1z"/><path fill="#301818" d="M123 526h1v20h-1zM197 526h1v20h-1zM207 526h1v20h-1zM217 526h1v20h-1z"/><path fill="#184890" d="M124 526h1v20h-1zM198 526h1v20h-1zM208 526h1v20h-1zM218 526h1v20h-1z"/><path fill="#784818" d="M125 526h1v20h-1zM130 526h1v20h-1zM135 526h1v20h-1zM214 526h1v20h-1z"/><path fill="#181830" d="M126 526h1v20h-1zM131 526h1v20h-1zM136 526h1v20h-1zM215 526h1v20h-1z"/><path fill="#789078" d="M127 526h1v20h-1zM137 526h1v20h-1z"/><path fill="#609090" d="M128 526h1v20h-1zM138 526h1v20h-1zM222 526h1v20h-1z"/><path fill="#606090" d="M129 526h1v20h-1zM134 526h1v20h-1zM213 526h1v20h-1z"/><path fill="#78c0f0" d="M132 526h1v20h-1zM142 526h1v20h-1zM152 526h1v20h-1zM162 526h1v20h-1z"/><path fill="#481818" d="M139 526h1v20h-1zM223 526h1v20h-1z"/><path fill="#181848" d="M140 526h1v20h-1zM150 526h1v20h-1zM160 526h1v20h-1zM170 526h1v20h-1zM190 526h1v20h-1zM224 526h1v20h-1z"/><path fill="#909060" d="M141 526h1v20h-1zM151 526h1v20h-1zM161 526h1v20h-1zM196 526h1v20h-1z"/><path fill="#fff0c0" d="M143 526h1v20h-1zM153 526h1v20h-1zM163 526h1v20h-1zM173 526h1v20h-1zM183 526h1v20h-1zM193 526h1v20h-1z"/><path fill="#786090" d="M144 526h1v20h-1zM154 526h1v20h-1zM164 526h1v20h-1zM228 526h1v20h-1z"/><path fill="#906060" d="M145 526h1v20h-1zM155 526h1v20h-1zM165 526h1v20h-1z"/><path fill="#907848" d="M146 526h1v20h-1zM156 526h1v20h-1zM166 526h1v20h-1zM225 526h1v20h-1z"/><path fill="#181818" d="M147 526h1v20h-1zM157 526h1v20h-1zM167 526h1v20h-1zM177 526h1v20h-1zM181 526h1v20h-1zM186 526h1v20h-1zM201 526h1v20h-1zM226 526h1v20h-1z"/><path fill="#307890" d="M148 526h1v20h-1zM158 526h1v20h-1zM227 526h1v20h-1z"/><path fill="#603018" d="M149 526h1v20h-1zM159 526h1v20h-1z"/><path fill="#306090" d="M168 526h1v20h-1zM178 526h1v20h-1z"/><path fill="#783018" d="M169 526h1v20h-1zM189 526h1v20h-1z"/><path fill="#60a8f0" d="M172 526h1v20h-1zM182 526h1v20h-1zM192 526h1v20h-1z"/><path fill="#906078" d="M174 526h1v20h-1zM184 526h1v20h-1zM194 526h1v20h-1zM199 526h1v20h-1zM204 526h1v20h-1zM209 526h1v20h-1zM219 526h1v20h-1z"/><path fill="#907860" d="M175 526h1v20h-1zM195 526h1v20h-1zM205 526h1v20h-1zM210 526h1v20h-1z"/><path fill="#909048" d="M176 526h1v20h-1z"/><path fill="#786078" d="M179 526h1v20h-1z"/><path fill="#906030" d="M180 526h1v20h-1zM185 526h1v20h-1z"/><path fill="#489090" d="M187 526h1v20h-1z"/><path fill="#607890" d="M188 526h1v20h-1z"/><path fill="#907830" d="M200 526h1v20h-1z"/><path fill="#4890d8" d="M202 526h1v20h-1z"/><path fill="#f0f0d8" d="M203 526h1v20h-1z"/><path fill="#90c0f0" d="M211 526h1v20h-1z"/><path fill="#c0f0ff" d="M220 526h1v20h-1z"/><path fill="#f0c078" d="M221 526h1v20h-1z"/><path fill="#d8f0ff" d="M229 526h1v20h-1z"/></svg>
<span class="t" style="left:240.82px;top:529.00px;font-size:12px;letter-spacing:0.617px;">911119127</span>
<span class="t" style="left:329.12px;top:529.00px;font-size:12px;letter-spacing:0.537px;">R.H. Hebel D2</span>
<span class="t" style="left:555.32px;top:529.00px;font-size:12px;letter-spacing:0.272px;">0</span>
<span class="t" style="left:639.72px;top:529.00px;font-size:12px;letter-spacing:0.272px;">3</span>
<span class="t" style="left:66.22px;top:563.00px;font-size:12px;letter-spacing:0.372px;">5</span>
<svg width="1440" height="900" viewBox="0 0 1440 900" style="left:0;top:0" shape-rendering="crispEdges"><path fill="#fff0a8" d="M118 560h1v20h-1zM133 560h1v20h-1z"/><path fill="#6060a8" d="M119 560h1v20h-1z"/><path fill="#c09060" d="M121 560h1v20h-1zM205 560h1v20h-1z"/><path fill="#789060" d="M122 560h1v20h-1zM171 560h1v20h-1zM186 560h1v20h-1zM201 560h1v20h-1zM216 560h1v20h-1z"/><path fill="#301818" d="M123 560h1v20h-1zM197 560h1v20h-1zM202 560h1v20h-1zM217 560h1v20h-1z"/><path fill="#184890" d="M124 560h1v20h-1zM198 560h1v20h-1zM218 560h1v20h-1z"/><path fill="#784818" d="M125 560h1v20h-1zM130 560h1v20h-1zM135 560h1v20h-1zM199 560h1v20h-1z"/><path fill="#181830" d="M126 560h1v20h-1zM131 560h1v20h-1zM136 560h1v20h-1zM200 560h1v20h-1z"/><path fill="#789078" d="M127 560h1v20h-1zM137 560h1v20h-1zM206 560h1v20h-1z"/><path fill="#609090" d="M128 560h1v20h-1zM138 560h1v20h-1zM187 560h1v20h-1zM207 560h1v20h-1zM222 560h1v20h-1z"/><path fill="#606090" d="M129 560h1v20h-1zM134 560h1v20h-1zM208 560h1v20h-1z"/><path fill="#78c0f0" d="M132 560h1v20h-1zM142 560h1v20h-1zM152 560h1v20h-1zM162 560h1v20h-1z"/><path fill="#481818" d="M139 560h1v20h-1zM223 560h1v20h-1z"/><path fill="#181848" d="M140 560h1v20h-1zM150 560h1v20h-1zM160 560h1v20h-1zM170 560h1v20h-1zM185 560h1v20h-1zM224 560h1v20h-1z"/><path fill="#909060" d="M141 560h1v20h-1zM151 560h1v20h-1zM161 560h1v20h-1zM196 560h1v20h-1z"/><path fill="#fff0c0" d="M143 560h1v20h-1zM153 560h1v20h-1zM163 560h1v20h-1zM173 560h1v20h-1zM183 560h1v20h-1zM193 560h1v20h-1z"/><path fill="#786090" d="M144 560h1v20h-1zM154 560h1v20h-1zM164 560h1v20h-1zM228 560h1v20h-1z"/><path fill="#906060" d="M145 560h1v20h-1zM155 560h1v20h-1zM165 560h1v20h-1z"/><path fill="#907848" d="M146 560h1v20h-1zM156 560h1v20h-1zM166 560h1v20h-1zM225 560h1v20h-1z"/><path fill="#181818" d="M147 560h1v20h-1zM157 560h1v20h-1zM167 560h1v20h-1zM177 560h1v20h-1zM181 560h1v20h-1zM191 560h1v20h-1zM211 560h1v20h-1zM226 560h1v20h-1z"/><path fill="#307890" d="M148 560h1v20h-1zM158 560h1v20h-1zM227 560h1v20h-1z"/><path fill="#603018" d="M149 560h1v20h-1zM159 560h1v20h-1z"/><path fill="#306090" d="M168 560h1v20h-1zM178 560h1v20h-1z"/><path fill="#783018" d="M169 560h1v20h-1zM184 560h1v20h-1z"/><path fill="#60a8f0" d="M172 560h1v20h-1zM182 560h1v20h-1zM192 560h1v20h-1z"/><path fill="#906078" d="M174 560h1v20h-1zM194 560h1v20h-1zM209 560h1v20h-1zM214 560h1v20h-1zM219 560h1v20h-1z"/><path fill="#907860" d="M175 560h1v20h-1zM195 560h1v20h-1zM215 560h1v20h-1z"/><path fill="#909048" d="M176 560h1v20h-1z"/><path fill="#786078" d="M179 560h1v20h-1zM189 560h1v20h-1z"/><path fill="#906030" d="M180 560h1v20h-1zM190 560h1v20h-1z"/><path fill="#607890" d="M188 560h1v20h-1z"/><path fill="#1860a8" d="M203 560h1v20h-1z"/><path fill="#907830" d="M210 560h1v20h-1z"/><path fill="#4890d8" d="M212 560h1v20h-1z"/><path fill="#f0f0d8" d="M213 560h1v20h-1z"/><path fill="#c0f0ff" d="M220 560h1v20h-1z"/><path fill="#f0c078" d="M221 560h1v20h-1z"/><path fill="#d8f0ff" d="M229 560h1v20h-1z"/></svg>
<span class="t" style="left:240.82px;top:563.00px;font-size:12px;letter-spacing:0.617px;">911116232</span>
<span class="t" style="left:329.12px;top:563.00px;font-size:12px;letter-spacing:0.569px;">Spez Schraube L=293 m/m</span>
<span class="t" style="left:555.32px;top:563.00px;font-size:12px;letter-spacing:0.272px;">0</span>
<span class="t" style="left:639.72px;top:563.00px;font-size:12px;letter-spacing:0.272px;">3</span>
<span class="t" style="left:66.22px;top:597.00px;font-size:12px;letter-spacing:0.372px;">7</span>
<svg width="1440" height="900" viewBox="0 0 1440 900" style="left:0;top:0" shape-rendering="crispEdges"><path fill="#fff0a8" d="M118 594h1v20h-1zM133 594h1v20h-1z"/><path fill="#6060a8" d="M119 594h1v20h-1z"/><path fill="#c09060" d="M121 594h1v20h-1zM215 594h1v20h-1z"/><path fill="#789060" d="M122 594h1v20h-1zM171 594h1v20h-1zM186 594h1v20h-1zM191 594h1v20h-1zM211 594h1v20h-1z"/><path fill="#301818" d="M123 594h1v20h-1zM197 594h1v20h-1zM212 594h1v20h-1z"/><path fill="#184890" d="M124 594h1v20h-1zM198 594h1v20h-1z"/><path fill="#784818" d="M125 594h1v20h-1zM130 594h1v20h-1zM135 594h1v20h-1zM199 594h1v20h-1zM209 594h1v20h-1z"/><path fill="#181830" d="M126 594h1v20h-1zM131 594h1v20h-1zM136 594h1v20h-1zM200 594h1v20h-1zM205 594h1v20h-1zM210 594h1v20h-1z"/><path fill="#789078" d="M127 594h1v20h-1zM137 594h1v20h-1zM167 594h1v20h-1zM201 594h1v20h-1zM206 594h1v20h-1zM216 594h1v20h-1z"/><path fill="#609090" d="M128 594h1v20h-1zM138 594h1v20h-1zM187 594h1v20h-1zM207 594h1v20h-1zM217 594h1v20h-1zM222 594h1v20h-1z"/><path fill="#606090" d="M129 594h1v20h-1zM134 594h1v20h-1zM168 594h1v20h-1zM208 594h1v20h-1zM218 594h1v20h-1z"/><path fill="#78c0f0" d="M132 594h1v20h-1zM142 594h1v20h-1zM152 594h1v20h-1z"/><path fill="#481818" d="M139 594h1v20h-1zM223 594h1v20h-1z"/><path fill="#181848" d="M140 594h1v20h-1zM150 594h1v20h-1zM160 594h1v20h-1zM170 594h1v20h-1zM185 594h1v20h-1zM190 594h1v20h-1zM224 594h1v20h-1z"/><path fill="#909060" d="M141 594h1v20h-1zM151 594h1v20h-1zM166 594h1v20h-1zM196 594h1v20h-1z"/><path fill="#fff0c0" d="M143 594h1v20h-1zM153 594h1v20h-1zM173 594h1v20h-1zM183 594h1v20h-1zM193 594h1v20h-1z"/><path fill="#786090" d="M144 594h1v20h-1zM154 594h1v20h-1zM228 594h1v20h-1z"/><path fill="#906060" d="M145 594h1v20h-1zM155 594h1v20h-1z"/><path fill="#907848" d="M146 594h1v20h-1zM156 594h1v20h-1zM161 594h1v20h-1zM225 594h1v20h-1z"/><path fill="#181818" d="M147 594h1v20h-1zM157 594h1v20h-1zM162 594h1v20h-1zM177 594h1v20h-1zM181 594h1v20h-1zM226 594h1v20h-1z"/><path fill="#307890" d="M148 594h1v20h-1zM158 594h1v20h-1zM227 594h1v20h-1z"/><path fill="#603018" d="M149 594h1v20h-1zM159 594h1v20h-1z"/><path fill="#3078c0" d="M163 594h1v20h-1z"/><path fill="#a86060" d="M165 594h1v20h-1z"/><path fill="#783018" d="M169 594h1v20h-1zM184 594h1v20h-1zM189 594h1v20h-1z"/><path fill="#60a8f0" d="M172 594h1v20h-1zM182 594h1v20h-1zM192 594h1v20h-1z"/><path fill="#906078" d="M174 594h1v20h-1zM194 594h1v20h-1zM219 594h1v20h-1z"/><path fill="#907860" d="M175 594h1v20h-1zM195 594h1v20h-1z"/><path fill="#909048" d="M176 594h1v20h-1z"/><path fill="#306090" d="M178 594h1v20h-1z"/><path fill="#786078" d="M179 594h1v20h-1z"/><path fill="#906030" d="M180 594h1v20h-1z"/><path fill="#607890" d="M188 594h1v20h-1z"/><path fill="#6090d8" d="M202 594h1v20h-1z"/><path fill="#f0f0d8" d="M203 594h1v20h-1z"/><path fill="#904818" d="M204 594h1v20h-1z"/><path fill="#1860a8" d="M213 594h1v20h-1z"/><path fill="#c0f0ff" d="M220 594h1v20h-1z"/><path fill="#f0c078" d="M221 594h1v20h-1z"/><path fill="#d8f0ff" d="M229 594h1v20h-1z"/></svg>
<span class="t" style="left:240.82px;top:597.00px;font-size:12px;letter-spacing:0.419px;">911316153</span>
<span class="t" style="left:329.12px;top:597.00px;font-size:12px;letter-spacing:0.411px;">S.L. Fuehrungsschiene ES PU</span>
<span class="t" style="left:555.32px;top:597.00px;font-size:12px;letter-spacing:0.272px;">0</span>
<span class="t" style="left:639.72px;top:597.00px;font-size:12px;letter-spacing:0.272px;">1</span>
<span class="t" style="left:66.22px;top:631.00px;font-size:12px;letter-spacing:0.372px;">8</span>
<svg width="1440" height="900" viewBox="0 0 1440 900" style="left:0;top:0" shape-rendering="crispEdges"><path fill="#fff0a8" d="M118 628h1v20h-1zM133 628h1v20h-1zM202 628h1v20h-1zM212 628h1v20h-1z"/><path fill="#6060a8" d="M119 628h1v20h-1z"/><path fill="#c09060" d="M121 628h1v20h-1z"/><path fill="#789060" d="M122 628h1v20h-1zM171 628h1v20h-1zM186 628h1v20h-1zM216 628h1v20h-1z"/><path fill="#301818" d="M123 628h1v20h-1zM197 628h1v20h-1zM217 628h1v20h-1z"/><path fill="#184890" d="M124 628h1v20h-1zM198 628h1v20h-1zM218 628h1v20h-1z"/><path fill="#784818" d="M125 628h1v20h-1zM130 628h1v20h-1zM135 628h1v20h-1zM214 628h1v20h-1z"/><path fill="#181830" d="M126 628h1v20h-1zM131 628h1v20h-1zM136 628h1v20h-1zM215 628h1v20h-1z"/><path fill="#789078" d="M127 628h1v20h-1zM137 628h1v20h-1zM167 628h1v20h-1z"/><path fill="#609090" d="M128 628h1v20h-1zM138 628h1v20h-1zM187 628h1v20h-1zM222 628h1v20h-1z"/><path fill="#606090" d="M129 628h1v20h-1zM134 628h1v20h-1zM168 628h1v20h-1zM208 628h1v20h-1zM213 628h1v20h-1z"/><path fill="#78c0f0" d="M132 628h1v20h-1zM142 628h1v20h-1zM152 628h1v20h-1z"/><path fill="#481818" d="M139 628h1v20h-1zM223 628h1v20h-1z"/><path fill="#181848" d="M140 628h1v20h-1zM150 628h1v20h-1zM160 628h1v20h-1zM170 628h1v20h-1zM185 628h1v20h-1zM224 628h1v20h-1z"/><path fill="#909060" d="M141 628h1v20h-1zM151 628h1v20h-1zM166 628h1v20h-1zM196 628h1v20h-1z"/><path fill="#fff0c0" d="M143 628h1v20h-1zM153 628h1v20h-1zM173 628h1v20h-1zM183 628h1v20h-1zM193 628h1v20h-1z"/><path fill="#786090" d="M144 628h1v20h-1zM154 628h1v20h-1zM228 628h1v20h-1z"/><path fill="#906060" d="M145 628h1v20h-1zM155 628h1v20h-1z"/><path fill="#907848" d="M146 628h1v20h-1zM156 628h1v20h-1zM161 628h1v20h-1zM225 628h1v20h-1z"/><path fill="#181818" d="M147 628h1v20h-1zM157 628h1v20h-1zM162 628h1v20h-1zM177 628h1v20h-1zM181 628h1v20h-1zM191 628h1v20h-1zM206 628h1v20h-1zM226 628h1v20h-1z"/><path fill="#307890" d="M148 628h1v20h-1zM158 628h1v20h-1zM227 628h1v20h-1z"/><path fill="#603018" d="M149 628h1v20h-1zM159 628h1v20h-1z"/><path fill="#3078c0" d="M163 628h1v20h-1z"/><path fill="#a86060" d="M165 628h1v20h-1z"/><path fill="#783018" d="M169 628h1v20h-1zM184 628h1v20h-1z"/><path fill="#60a8f0" d="M172 628h1v20h-1zM182 628h1v20h-1zM192 628h1v20h-1z"/><path fill="#906078" d="M174 628h1v20h-1zM194 628h1v20h-1zM199 628h1v20h-1zM209 628h1v20h-1zM219 628h1v20h-1z"/><path fill="#907860" d="M175 628h1v20h-1zM195 628h1v20h-1zM200 628h1v20h-1zM210 628h1v20h-1z"/><path fill="#909048" d="M176 628h1v20h-1z"/><path fill="#306090" d="M178 628h1v20h-1z"/><path fill="#786078" d="M179 628h1v20h-1zM189 628h1v20h-1z"/><path fill="#906030" d="M180 628h1v20h-1zM190 628h1v20h-1z"/><path fill="#607890" d="M188 628h1v20h-1z"/><path fill="#90c0f0" d="M201 628h1v20h-1zM211 628h1v20h-1z"/><path fill="#601818" d="M203 628h1v20h-1z"/><path fill="#183060" d="M204 628h1v20h-1z"/><path fill="#907830" d="M205 628h1v20h-1z"/><path fill="#487890" d="M207 628h1v20h-1z"/><path fill="#c0f0ff" d="M220 628h1v20h-1z"/><path fill="#f0c078" d="M221 628h1v20h-1z"/><path fill="#d8f0ff" d="M229 628h1v20h-1z"/></svg>
<span class="t" style="left:240.82px;top:631.00px;font-size:12px;letter-spacing:0.419px;">911316207</span>
<span class="t" style="left:329.12px;top:631.00px;font-size:12px;letter-spacing:0.704px;">R.H. Fuehrungsschiene</span>
<span class="t" style="left:555.32px;top:631.00px;font-size:12px;letter-spacing:0.272px;">0</span>
<span class="t" style="left:636.12px;top:631.00px;font-size:12px;letter-spacing:0.300px;">12</span>
<span class="t" style="left:66.22px;top:665.00px;font-size:12px;letter-spacing:0.372px;">9</span>
<svg width="1440" height="900" viewBox="0 0 1440 900" style="left:0;top:0" shape-rendering="crispEdges"><path fill="#fff0a8" d="M118 662h1v20h-1zM133 662h1v20h-1zM202 662h1v20h-1z"/><path fill="#6060a8" d="M119 662h1v20h-1z"/><path fill="#c09060" d="M121 662h1v20h-1z"/><path fill="#789060" d="M122 662h1v20h-1zM171 662h1v20h-1zM186 662h1v20h-1zM191 662h1v20h-1zM206 662h1v20h-1z"/><path fill="#301818" d="M123 662h1v20h-1zM197 662h1v20h-1zM207 662h1v20h-1z"/><path fill="#184890" d="M124 662h1v20h-1zM198 662h1v20h-1zM208 662h1v20h-1z"/><path fill="#784818" d="M125 662h1v20h-1zM130 662h1v20h-1zM135 662h1v20h-1zM204 662h1v20h-1zM209 662h1v20h-1z"/><path fill="#181830" d="M126 662h1v20h-1zM131 662h1v20h-1zM136 662h1v20h-1zM205 662h1v20h-1zM210 662h1v20h-1zM215 662h1v20h-1z"/><path fill="#789078" d="M127 662h1v20h-1zM137 662h1v20h-1zM167 662h1v20h-1zM211 662h1v20h-1zM216 662h1v20h-1z"/><path fill="#609090" d="M128 662h1v20h-1zM138 662h1v20h-1zM187 662h1v20h-1zM217 662h1v20h-1zM222 662h1v20h-1z"/><path fill="#606090" d="M129 662h1v20h-1zM134 662h1v20h-1zM168 662h1v20h-1zM203 662h1v20h-1zM218 662h1v20h-1z"/><path fill="#78c0f0" d="M132 662h1v20h-1zM142 662h1v20h-1zM152 662h1v20h-1z"/><path fill="#481818" d="M139 662h1v20h-1zM223 662h1v20h-1z"/><path fill="#181848" d="M140 662h1v20h-1zM150 662h1v20h-1zM160 662h1v20h-1zM170 662h1v20h-1zM185 662h1v20h-1zM190 662h1v20h-1zM224 662h1v20h-1z"/><path fill="#909060" d="M141 662h1v20h-1zM151 662h1v20h-1zM166 662h1v20h-1zM196 662h1v20h-1z"/><path fill="#fff0c0" d="M143 662h1v20h-1zM153 662h1v20h-1zM173 662h1v20h-1zM183 662h1v20h-1zM193 662h1v20h-1z"/><path fill="#786090" d="M144 662h1v20h-1zM154 662h1v20h-1zM228 662h1v20h-1z"/><path fill="#906060" d="M145 662h1v20h-1zM155 662h1v20h-1z"/><path fill="#907848" d="M146 662h1v20h-1zM156 662h1v20h-1zM161 662h1v20h-1zM225 662h1v20h-1z"/><path fill="#181818" d="M147 662h1v20h-1zM157 662h1v20h-1zM162 662h1v20h-1zM177 662h1v20h-1zM181 662h1v20h-1zM226 662h1v20h-1z"/><path fill="#307890" d="M148 662h1v20h-1zM158 662h1v20h-1zM227 662h1v20h-1z"/><path fill="#603018" d="M149 662h1v20h-1zM159 662h1v20h-1z"/><path fill="#3078c0" d="M163 662h1v20h-1z"/><path fill="#a86060" d="M165 662h1v20h-1z"/><path fill="#783018" d="M169 662h1v20h-1zM184 662h1v20h-1zM189 662h1v20h-1z"/><path fill="#60a8f0" d="M172 662h1v20h-1zM182 662h1v20h-1zM192 662h1v20h-1z"/><path fill="#906078" d="M174 662h1v20h-1zM194 662h1v20h-1zM199 662h1v20h-1zM219 662h1v20h-1z"/><path fill="#907860" d="M175 662h1v20h-1zM195 662h1v20h-1zM200 662h1v20h-1z"/><path fill="#909048" d="M176 662h1v20h-1z"/><path fill="#306090" d="M178 662h1v20h-1z"/><path fill="#786078" d="M179 662h1v20h-1z"/><path fill="#906030" d="M180 662h1v20h-1z"/><path fill="#607890" d="M188 662h1v20h-1z"/><path fill="#90c0f0" d="M201 662h1v20h-1z"/><path fill="#6090d8" d="M212 662h1v20h-1z"/><path fill="#f0f0d8" d="M213 662h1v20h-1z"/><path fill="#904818" d="M214 662h1v20h-1z"/><path fill="#c0f0ff" d="M220 662h1v20h-1z"/><path fill="#f0c078" d="M221 662h1v20h-1z"/><path fill="#d8f0ff" d="M229 662h1v20h-1z"/></svg>
<span class="t" style="left:240.82px;top:665.00px;font-size:12px;letter-spacing:0.419px;">911316175</span>
<span class="t" style="left:329.12px;top:665.00px;font-size:12px;letter-spacing:0.826px;">Obere Fuehrungsschiene P.U.</span>
<span class="t" style="left:555.32px;top:665.00px;font-size:12px;letter-spacing:0.272px;">0</span>
<span class="t" style="left:639.72px;top:665.00px;font-size:12px;letter-spacing:0.272px;">4</span>
<span class="t" style="left:66.22px;top:699.00px;font-size:12px;letter-spacing:0.250px;">10</span>
<svg width="1440" height="900" viewBox="0 0 1440 900" style="left:0;top:0" shape-rendering="crispEdges"><path fill="#fff0a8" d="M118 696h1v20h-1zM133 696h1v20h-1zM202 696h1v20h-1zM212 696h1v20h-1z"/><path fill="#6060a8" d="M119 696h1v20h-1z"/><path fill="#c09060" d="M121 696h1v20h-1z"/><path fill="#789060" d="M122 696h1v20h-1zM171 696h1v20h-1zM186 696h1v20h-1zM216 696h1v20h-1z"/><path fill="#301818" d="M123 696h1v20h-1zM217 696h1v20h-1z"/><path fill="#184890" d="M124 696h1v20h-1zM218 696h1v20h-1z"/><path fill="#784818" d="M125 696h1v20h-1zM130 696h1v20h-1zM135 696h1v20h-1z"/><path fill="#181830" d="M126 696h1v20h-1zM131 696h1v20h-1zM136 696h1v20h-1z"/><path fill="#789078" d="M127 696h1v20h-1zM137 696h1v20h-1z"/><path fill="#609090" d="M128 696h1v20h-1zM138 696h1v20h-1zM187 696h1v20h-1zM197 696h1v20h-1zM222 696h1v20h-1z"/><path fill="#606090" d="M129 696h1v20h-1zM134 696h1v20h-1zM198 696h1v20h-1zM208 696h1v20h-1z"/><path fill="#78c0f0" d="M132 696h1v20h-1zM142 696h1v20h-1zM152 696h1v20h-1zM162 696h1v20h-1z"/><path fill="#481818" d="M139 696h1v20h-1zM223 696h1v20h-1z"/><path fill="#181848" d="M140 696h1v20h-1zM150 696h1v20h-1zM160 696h1v20h-1zM170 696h1v20h-1zM185 696h1v20h-1zM190 696h1v20h-1zM224 696h1v20h-1z"/><path fill="#909060" d="M141 696h1v20h-1zM151 696h1v20h-1zM161 696h1v20h-1z"/><path fill="#fff0c0" d="M143 696h1v20h-1zM153 696h1v20h-1zM163 696h1v20h-1zM173 696h1v20h-1zM183 696h1v20h-1z"/><path fill="#786090" d="M144 696h1v20h-1zM154 696h1v20h-1zM164 696h1v20h-1zM228 696h1v20h-1z"/><path fill="#906060" d="M145 696h1v20h-1zM155 696h1v20h-1zM165 696h1v20h-1z"/><path fill="#907848" d="M146 696h1v20h-1zM156 696h1v20h-1zM166 696h1v20h-1zM225 696h1v20h-1z"/><path fill="#181818" d="M147 696h1v20h-1zM157 696h1v20h-1zM167 696h1v20h-1zM177 696h1v20h-1zM181 696h1v20h-1zM192 696h1v20h-1zM206 696h1v20h-1zM226 696h1v20h-1z"/><path fill="#307890" d="M148 696h1v20h-1zM158 696h1v20h-1zM227 696h1v20h-1z"/><path fill="#603018" d="M149 696h1v20h-1zM159 696h1v20h-1z"/><path fill="#306090" d="M168 696h1v20h-1zM178 696h1v20h-1z"/><path fill="#783018" d="M169 696h1v20h-1zM184 696h1v20h-1zM189 696h1v20h-1z"/><path fill="#60a8f0" d="M172 696h1v20h-1zM182 696h1v20h-1z"/><path fill="#906078" d="M174 696h1v20h-1zM199 696h1v20h-1zM209 696h1v20h-1zM219 696h1v20h-1z"/><path fill="#907860" d="M175 696h1v20h-1zM200 696h1v20h-1zM210 696h1v20h-1zM215 696h1v20h-1z"/><path fill="#909048" d="M176 696h1v20h-1z"/><path fill="#786078" d="M179 696h1v20h-1z"/><path fill="#906030" d="M180 696h1v20h-1z"/><path fill="#607890" d="M188 696h1v20h-1z"/><path fill="#789048" d="M191 696h1v20h-1z"/><path fill="#3060c0" d="M193 696h1v20h-1z"/><path fill="#c07860" d="M195 696h1v20h-1z"/><path fill="#909078" d="M196 696h1v20h-1z"/><path fill="#90c0f0" d="M201 696h1v20h-1zM211 696h1v20h-1z"/><path fill="#601818" d="M203 696h1v20h-1zM213 696h1v20h-1z"/><path fill="#183060" d="M204 696h1v20h-1zM214 696h1v20h-1z"/><path fill="#907830" d="M205 696h1v20h-1z"/><path fill="#487890" d="M207 696h1v20h-1z"/><path fill="#c0f0ff" d="M220 696h1v20h-1z"/><path fill="#f0c078" d="M221 696h1v20h-1z"/><path fill="#d8f0ff" d="M229 696h1v20h-1z"/></svg>
<span class="t" style="left:240.82px;top:699.00px;font-size:12px;letter-spacing:0.617px;">911116304</span>
<span class="t" style="left:329.12px;top:699.00px;font-size:12px;letter-spacing:0.884px;">Obere Fuehrungsschiene</span>
<span class="t" style="left:555.32px;top:699.00px;font-size:12px;letter-spacing:0.272px;">0</span>
<span class="t" style="left:639.72px;top:699.00px;font-size:12px;letter-spacing:0.272px;">0</span>
<span class="t" style="left:66.22px;top:733.00px;font-size:12px;letter-spacing:0.696px;">11</span>
<svg width="1440" height="900" viewBox="0 0 1440 900" style="left:0;top:0" shape-rendering="crispEdges"><path fill="#fff0a8" d="M118 730h1v20h-1zM133 730h1v20h-1z"/><path fill="#6060a8" d="M119 730h1v20h-1z"/><path fill="#c09060" d="M121 730h1v20h-1z"/><path fill="#789060" d="M122 730h1v20h-1zM171 730h1v20h-1zM186 730h1v20h-1z"/><path fill="#301818" d="M123 730h1v20h-1z"/><path fill="#184890" d="M124 730h1v20h-1z"/><path fill="#784818" d="M125 730h1v20h-1zM130 730h1v20h-1zM135 730h1v20h-1zM199 730h1v20h-1zM209 730h1v20h-1z"/><path fill="#181830" d="M126 730h1v20h-1zM131 730h1v20h-1zM136 730h1v20h-1zM166 730h1v20h-1zM200 730h1v20h-1zM210 730h1v20h-1zM215 730h1v20h-1z"/><path fill="#789078" d="M127 730h1v20h-1zM137 730h1v20h-1zM201 730h1v20h-1zM211 730h1v20h-1zM216 730h1v20h-1z"/><path fill="#609090" d="M128 730h1v20h-1zM138 730h1v20h-1zM187 730h1v20h-1zM217 730h1v20h-1zM222 730h1v20h-1z"/><path fill="#606090" d="M129 730h1v20h-1zM134 730h1v20h-1zM168 730h1v20h-1zM198 730h1v20h-1zM208 730h1v20h-1zM218 730h1v20h-1z"/><path fill="#78c0f0" d="M132 730h1v20h-1zM142 730h1v20h-1zM152 730h1v20h-1zM162 730h1v20h-1z"/><path fill="#481818" d="M139 730h1v20h-1zM193 730h1v20h-1zM223 730h1v20h-1z"/><path fill="#181848" d="M140 730h1v20h-1zM150 730h1v20h-1zM160 730h1v20h-1zM170 730h1v20h-1zM185 730h1v20h-1zM224 730h1v20h-1z"/><path fill="#909060" d="M141 730h1v20h-1zM151 730h1v20h-1zM161 730h1v20h-1z"/><path fill="#fff0c0" d="M143 730h1v20h-1zM153 730h1v20h-1zM163 730h1v20h-1zM173 730h1v20h-1zM183 730h1v20h-1z"/><path fill="#786090" d="M144 730h1v20h-1zM154 730h1v20h-1zM164 730h1v20h-1zM228 730h1v20h-1z"/><path fill="#906060" d="M145 730h1v20h-1zM155 730h1v20h-1z"/><path fill="#907848" d="M146 730h1v20h-1zM156 730h1v20h-1zM225 730h1v20h-1z"/><path fill="#181818" d="M147 730h1v20h-1zM157 730h1v20h-1zM177 730h1v20h-1zM181 730h1v20h-1zM196 730h1v20h-1zM206 730h1v20h-1zM226 730h1v20h-1z"/><path fill="#307890" d="M148 730h1v20h-1zM158 730h1v20h-1zM227 730h1v20h-1z"/><path fill="#603018" d="M149 730h1v20h-1zM159 730h1v20h-1z"/><path fill="#904818" d="M165 730h1v20h-1zM214 730h1v20h-1z"/><path fill="#609078" d="M167 730h1v20h-1z"/><path fill="#783018" d="M169 730h1v20h-1zM184 730h1v20h-1z"/><path fill="#60a8f0" d="M172 730h1v20h-1zM182 730h1v20h-1z"/><path fill="#906078" d="M174 730h1v20h-1zM204 730h1v20h-1zM219 730h1v20h-1z"/><path fill="#907860" d="M175 730h1v20h-1zM190 730h1v20h-1z"/><path fill="#909048" d="M176 730h1v20h-1z"/><path fill="#306090" d="M178 730h1v20h-1z"/><path fill="#786078" d="M179 730h1v20h-1zM189 730h1v20h-1z"/><path fill="#906030" d="M180 730h1v20h-1zM195 730h1v20h-1z"/><path fill="#607890" d="M188 730h1v20h-1z"/><path fill="#90d8f0" d="M191 730h1v20h-1z"/><path fill="#f0d890" d="M192 730h1v20h-1z"/><path fill="#183078" d="M194 730h1v20h-1z"/><path fill="#487890" d="M197 730h1v20h-1zM207 730h1v20h-1z"/><path fill="#6090d8" d="M202 730h1v20h-1zM212 730h1v20h-1z"/><path fill="#f0f0d8" d="M203 730h1v20h-1zM213 730h1v20h-1z"/><path fill="#907830" d="M205 730h1v20h-1z"/><path fill="#c0f0ff" d="M220 730h1v20h-1z"/><path fill="#f0c078" d="M221 730h1v20h-1z"/><path fill="#d8f0ff" d="M229 730h1v20h-1z"/></svg>
<span class="t" style="left:240.82px;top:733.00px;font-size:12px;letter-spacing:0.419px;">911816085</span>
<span class="t" style="left:329.12px;top:733.00px;font-size:12px;letter-spacing:0.884px;">Obere Fuehrungsschiene</span>
<span class="t" style="left:555.32px;top:733.00px;font-size:12px;letter-spacing:0.272px;">0</span>
<span class="t" style="left:639.72px;top:733.00px;font-size:12px;letter-spacing:0.272px;">0</span>
<span class="t" style="left:66.22px;top:767.00px;font-size:12px;letter-spacing:0.250px;">12</span>
<svg width="1440" height="900" viewBox="0 0 1440 900" style="left:0;top:0" shape-rendering="crispEdges"><path fill="#fff0a8" d="M118 764h1v20h-1zM133 764h1v20h-1zM202 764h1v20h-1z"/><path fill="#6060a8" d="M119 764h1v20h-1z"/><path fill="#c09060" d="M121 764h1v20h-1z"/><path fill="#789060" d="M122 764h1v20h-1zM171 764h1v20h-1zM186 764h1v20h-1zM216 764h1v20h-1z"/><path fill="#301818" d="M123 764h1v20h-1zM217 764h1v20h-1z"/><path fill="#184890" d="M124 764h1v20h-1zM218 764h1v20h-1z"/><path fill="#784818" d="M125 764h1v20h-1zM130 764h1v20h-1zM135 764h1v20h-1z"/><path fill="#181830" d="M126 764h1v20h-1zM131 764h1v20h-1zM136 764h1v20h-1z"/><path fill="#789078" d="M127 764h1v20h-1zM137 764h1v20h-1z"/><path fill="#609090" d="M128 764h1v20h-1zM138 764h1v20h-1zM187 764h1v20h-1zM197 764h1v20h-1zM222 764h1v20h-1z"/><path fill="#606090" d="M129 764h1v20h-1zM134 764h1v20h-1zM198 764h1v20h-1zM208 764h1v20h-1z"/><path fill="#78c0f0" d="M132 764h1v20h-1zM142 764h1v20h-1zM152 764h1v20h-1zM162 764h1v20h-1z"/><path fill="#481818" d="M139 764h1v20h-1zM223 764h1v20h-1z"/><path fill="#181848" d="M140 764h1v20h-1zM150 764h1v20h-1zM160 764h1v20h-1zM170 764h1v20h-1zM185 764h1v20h-1zM190 764h1v20h-1zM224 764h1v20h-1z"/><path fill="#909060" d="M141 764h1v20h-1zM151 764h1v20h-1zM161 764h1v20h-1z"/><path fill="#fff0c0" d="M143 764h1v20h-1zM153 764h1v20h-1zM163 764h1v20h-1zM173 764h1v20h-1zM183 764h1v20h-1z"/><path fill="#786090" d="M144 764h1v20h-1zM154 764h1v20h-1zM164 764h1v20h-1zM228 764h1v20h-1z"/><path fill="#906060" d="M145 764h1v20h-1zM155 764h1v20h-1zM165 764h1v20h-1z"/><path fill="#907848" d="M146 764h1v20h-1zM156 764h1v20h-1zM166 764h1v20h-1zM225 764h1v20h-1z"/><path fill="#181818" d="M147 764h1v20h-1zM157 764h1v20h-1zM167 764h1v20h-1zM177 764h1v20h-1zM181 764h1v20h-1zM192 764h1v20h-1zM206 764h1v20h-1zM211 764h1v20h-1zM226 764h1v20h-1z"/><path fill="#307890" d="M148 764h1v20h-1zM158 764h1v20h-1zM227 764h1v20h-1z"/><path fill="#603018" d="M149 764h1v20h-1zM159 764h1v20h-1z"/><path fill="#306090" d="M168 764h1v20h-1zM178 764h1v20h-1z"/><path fill="#783018" d="M169 764h1v20h-1zM184 764h1v20h-1zM189 764h1v20h-1z"/><path fill="#60a8f0" d="M172 764h1v20h-1zM182 764h1v20h-1z"/><path fill="#906078" d="M174 764h1v20h-1zM199 764h1v20h-1zM209 764h1v20h-1zM214 764h1v20h-1zM219 764h1v20h-1z"/><path fill="#907860" d="M175 764h1v20h-1zM200 764h1v20h-1zM215 764h1v20h-1z"/><path fill="#909048" d="M176 764h1v20h-1z"/><path fill="#786078" d="M179 764h1v20h-1z"/><path fill="#906030" d="M180 764h1v20h-1z"/><path fill="#607890" d="M188 764h1v20h-1z"/><path fill="#789048" d="M191 764h1v20h-1z"/><path fill="#3060c0" d="M193 764h1v20h-1z"/><path fill="#c07860" d="M195 764h1v20h-1z"/><path fill="#909078" d="M196 764h1v20h-1z"/><path fill="#90c0f0" d="M201 764h1v20h-1z"/><path fill="#601818" d="M203 764h1v20h-1z"/><path fill="#183060" d="M204 764h1v20h-1z"/><path fill="#907830" d="M205 764h1v20h-1zM210 764h1v20h-1z"/><path fill="#487890" d="M207 764h1v20h-1z"/><path fill="#4890d8" d="M212 764h1v20h-1z"/><path fill="#f0f0d8" d="M213 764h1v20h-1z"/><path fill="#c0f0ff" d="M220 764h1v20h-1z"/><path fill="#f0c078" d="M221 764h1v20h-1z"/><path fill="#d8f0ff" d="M229 764h1v20h-1z"/></svg>
<span class="t" style="left:240.82px;top:767.00px;font-size:12px;letter-spacing:0.617px;">911116302</span>
<span class="t" style="left:329.12px;top:767.00px;font-size:12px;letter-spacing:0.881px;">Projectiel Fuehrungseinsatz</span>
<span class="t" style="left:555.32px;top:767.00px;font-size:12px;letter-spacing:0.272px;">0</span>
<span class="t" style="left:639.72px;top:767.00px;font-size:12px;letter-spacing:0.272px;">2</span>
<span class="t" style="left:66.22px;top:801.00px;font-size:12px;letter-spacing:0.250px;">14</span>
<svg width="1440" height="900" viewBox="0 0 1440 900" style="left:0;top:0" shape-rendering="crispEdges"><path fill="#fff0a8" d="M118 798h1v20h-1zM133 798h1v20h-1z"/><path fill="#6060a8" d="M119 798h1v20h-1z"/><path fill="#c09060" d="M121 798h1v20h-1z"/><path fill="#789060" d="M122 798h1v20h-1zM171 798h1v20h-1zM186 798h1v20h-1z"/><path fill="#301818" d="M123 798h1v20h-1zM197 798h1v20h-1z"/><path fill="#184890" d="M124 798h1v20h-1zM198 798h1v20h-1z"/><path fill="#784818" d="M125 798h1v20h-1zM130 798h1v20h-1zM135 798h1v20h-1zM209 798h1v20h-1z"/><path fill="#181830" d="M126 798h1v20h-1zM131 798h1v20h-1zM136 798h1v20h-1zM205 798h1v20h-1zM210 798h1v20h-1z"/><path fill="#789078" d="M127 798h1v20h-1zM137 798h1v20h-1zM167 798h1v20h-1zM206 798h1v20h-1zM211 798h1v20h-1z"/><path fill="#609090" d="M128 798h1v20h-1zM138 798h1v20h-1zM187 798h1v20h-1zM207 798h1v20h-1zM222 798h1v20h-1z"/><path fill="#606090" d="M129 798h1v20h-1zM134 798h1v20h-1zM168 798h1v20h-1zM208 798h1v20h-1zM218 798h1v20h-1z"/><path fill="#78c0f0" d="M132 798h1v20h-1zM142 798h1v20h-1zM152 798h1v20h-1z"/><path fill="#481818" d="M139 798h1v20h-1zM223 798h1v20h-1z"/><path fill="#181848" d="M140 798h1v20h-1zM150 798h1v20h-1zM160 798h1v20h-1zM170 798h1v20h-1zM185 798h1v20h-1zM224 798h1v20h-1z"/><path fill="#909060" d="M141 798h1v20h-1zM151 798h1v20h-1zM166 798h1v20h-1zM196 798h1v20h-1z"/><path fill="#fff0c0" d="M143 798h1v20h-1zM153 798h1v20h-1zM173 798h1v20h-1zM183 798h1v20h-1zM193 798h1v20h-1z"/><path fill="#786090" d="M144 798h1v20h-1zM154 798h1v20h-1zM228 798h1v20h-1z"/><path fill="#906060" d="M145 798h1v20h-1zM155 798h1v20h-1z"/><path fill="#907848" d="M146 798h1v20h-1zM156 798h1v20h-1zM161 798h1v20h-1zM225 798h1v20h-1z"/><path fill="#181818" d="M147 798h1v20h-1zM157 798h1v20h-1zM162 798h1v20h-1zM177 798h1v20h-1zM181 798h1v20h-1zM191 798h1v20h-1zM201 798h1v20h-1zM216 798h1v20h-1zM226 798h1v20h-1z"/><path fill="#307890" d="M148 798h1v20h-1zM158 798h1v20h-1zM227 798h1v20h-1z"/><path fill="#603018" d="M149 798h1v20h-1zM159 798h1v20h-1z"/><path fill="#3078c0" d="M163 798h1v20h-1z"/><path fill="#a86060" d="M165 798h1v20h-1z"/><path fill="#783018" d="M169 798h1v20h-1zM184 798h1v20h-1z"/><path fill="#60a8f0" d="M172 798h1v20h-1zM182 798h1v20h-1zM192 798h1v20h-1z"/><path fill="#906078" d="M174 798h1v20h-1zM194 798h1v20h-1zM199 798h1v20h-1zM214 798h1v20h-1zM219 798h1v20h-1z"/><path fill="#907860" d="M175 798h1v20h-1zM195 798h1v20h-1z"/><path fill="#909048" d="M176 798h1v20h-1z"/><path fill="#306090" d="M178 798h1v20h-1z"/><path fill="#786078" d="M179 798h1v20h-1zM189 798h1v20h-1z"/><path fill="#906030" d="M180 798h1v20h-1zM190 798h1v20h-1z"/><path fill="#607890" d="M188 798h1v20h-1z"/><path fill="#907830" d="M200 798h1v20h-1zM215 798h1v20h-1z"/><path fill="#4890d8" d="M202 798h1v20h-1z"/><path fill="#f0f0d8" d="M203 798h1v20h-1zM213 798h1v20h-1z"/><path fill="#904818" d="M204 798h1v20h-1z"/><path fill="#6090d8" d="M212 798h1v20h-1z"/><path fill="#487890" d="M217 798h1v20h-1z"/><path fill="#c0f0ff" d="M220 798h1v20h-1z"/><path fill="#f0c078" d="M221 798h1v20h-1z"/><path fill="#d8f0ff" d="M229 798h1v20h-1z"/></svg>
<span class="t" style="left:240.82px;top:801.00px;font-size:12px;letter-spacing:0.419px;">911316268</span>
<span class="t" style="left:329.12px;top:801.00px;font-size:12px;letter-spacing:0.627px;">S.L. Fuehrungsschiene P.U.</span>
<span class="t" style="left:555.32px;top:801.00px;font-size:12px;letter-spacing:0.272px;">0</span>
<span class="t" style="left:639.72px;top:801.00px;font-size:12px;letter-spacing:0.272px;">4</span>
</div>
<!-- ===== SHEET TOP: logo, title, control box ===== -->
<svg width="1440" height="900" viewBox="0 0 1440 900" style="left:0;top:0">
 <!-- logo -->
 <circle cx="86.9" cy="198.7" r="17.5" fill="none" stroke="#34526f" stroke-width="5"/>
 <circle cx="86.6" cy="186.4" r="11.6" fill="#f2f2f2"/>
 <rect x="82.8" y="198.3" width="8.1" height="17" fill="#34526f"/>
 <circle cx="86.6" cy="186.4" r="9.7" fill="#f07a62"/>
 <!-- box -->
 <rect x="64.5" y="244.5" width="1094" height="97" fill="none" stroke="#000" stroke-width="1"/>
</svg>
<span class="t" id="lg1" style="left:109.6px;top:184.5px;font-size:30px;font-weight:bold;color:#f07a62;letter-spacing:-1px;transform:scaleX(0.84);transform-origin:0 0;">intra</span>
<span class="t" id="lg2" style="left:160.6px;top:184.5px;font-size:30px;font-weight:bold;color:#34526f;letter-spacing:-1px;transform:scaleX(0.84);transform-origin:0 0;">logic</span>
<span class="t" style="left:949.20px;top:188.00px;font-size:25px;letter-spacing:-0.855px;font-weight:bold;color:#002060;">INVENTARISLIJST</span>
<span class="t" style="left:1175.32px;top:194.00px;font-size:12px;letter-spacing:0.163px;font-weight:bold;color:#e0683c;">[ 3 ]</span>
<!-- labels -->
<div class="a" style="left:98px;top:269px;width:96px;height:16px;background:#f0f0f0"></div>
<div class="a" style="left:227px;top:269px;width:96px;height:16px;background:#f0f0f0"></div>
<span class="t" style="left:97.47px;top:273.00px;font-size:10.8px;letter-spacing:-0.486px;transform:scaleX(0.9523);transform-origin:0 0;font-weight:bold;">SECTIE</span>
<span class="t" style="left:227.57px;top:273.00px;font-size:10.8px;letter-spacing:-0.336px;font-weight:bold;">KAST</span>
<!-- SECTIE combobox -->
<div class="a" style="left:98px;top:286px;width:106px;height:23px;box-sizing:border-box;background:#fff;border:1px solid;border-color:#a0a0a0 #e3e3e3 #e3e3e3 #a0a0a0"></div>
<div class="a" style="left:99px;top:287px;width:104px;height:21px;box-sizing:border-box;background:#fff;border:1px solid;border-color:#696969 #fff #fff #696969"></div>
<div class="a" style="left:186px;top:288px;width:17px;height:20px;box-sizing:border-box;background:#f0f0f0;border:1px solid;border-color:#fff #696969 #696969 #fff"></div>
<div class="a" style="left:187px;top:289px;width:15px;height:18px;box-sizing:border-box;border:1px solid;border-color:#f0f0f0 #a0a0a0 #a0a0a0 #f0f0f0"></div>
<!-- KAST combobox -->
<div class="a" style="left:227px;top:286px;width:95px;height:23px;box-sizing:border-box;background:#fff;border:1px solid;border-color:#a0a0a0 #e3e3e3 #e3e3e3 #a0a0a0"></div>
<div class="a" style="left:228px;top:287px;width:93px;height:21px;box-sizing:border-box;background:#fff;border:1px solid;border-color:#696969 #fff #fff #696969"></div>
<div class="a" style="left:304px;top:288px;width:17px;height:20px;box-sizing:border-box;background:#f0f0f0;border:1px solid;border-color:#fff #696969 #696969 #fff"></div>
<div class="a" style="left:305px;top:289px;width:15px;height:18px;box-sizing:border-box;border:1px solid;border-color:#f0f0f0 #a0a0a0 #a0a0a0 #f0f0f0"></div>
<div class="a" style="left:239px;top:290px;width:7px;height:16px;background:#a8cdf1"></div>
<span class="t" style="left:239.50px;top:294.00px;font-size:12.6px;letter-spacing:-0.608px;">3</span>
<!-- buttons -->
<div class="a" style="left:345px;top:281px;width:96px;height:32px;box-sizing:border-box;background:#f0f0f0;border:1px solid;border-color:#fff #696969 #696969 #fff"></div>
<div class="a" style="left:346px;top:282px;width:94px;height:30px;box-sizing:border-box;border:1px solid;border-color:#f0f0f0 #a0a0a0 #a0a0a0 #f0f0f0"></div>
<div class="a" style="left:449px;top:281px;width:80px;height:32px;box-sizing:border-box;background:#f0f0f0;border:1px solid;border-color:#fff #696969 #696969 #fff"></div>
<div class="a" style="left:450px;top:282px;width:78px;height:30px;box-sizing:border-box;border:1px solid;border-color:#f0f0f0 #a0a0a0 #a0a0a0 #f0f0f0"></div>
<span class="t" style="left:376.88px;top:291.00px;font-size:13px;letter-spacing:0.761px;">Print</span>
<span class="t" style="left:478.05px;top:292.00px;font-size:11.2px;letter-spacing:-0.226px;">PDF</span>
<svg width="1440" height="900" viewBox="0 0 1440 900" style="left:0;top:0">
 <path d="M191 296h7l-3.5 3.8z M309 296.4h7l-3.5 3.8z" fill="#000"/>
</svg>
<!-- ===== DROPDOWN LIST + CURSOR ===== -->
<div class="a" style="left:227px;top:310px;width:98px;height:146px;box-sizing:border-box;background:#fff;border:1px solid #000"></div>
<div class="a" style="left:228px;top:311px;width:79px;height:18px;box-sizing:border-box;background:#2179d4;border:1px dotted #f0a060"></div>
<!-- scrollbar -->
<div class="a" style="left:307px;top:311px;width:17px;height:144px;background:#f7f7f7;background-image:repeating-conic-gradient(#f0f0f0 0% 25%, #ffffff 0% 50%);background-size:2px 2px"></div>
<div class="a" style="left:307px;top:311px;width:17px;height:17px;box-sizing:border-box;background:#f0f0f0;border:1px solid;border-color:#f0f0f0 #696969 #696969 #f0f0f0"></div>
<div class="a" style="left:308px;top:312px;width:15px;height:15px;box-sizing:border-box;border:1px solid;border-color:#fff #a0a0a0 #a0a0a0 #fff"></div>
<div class="a" style="left:307px;top:339px;width:17px;height:31px;box-sizing:border-box;background:#f0f0f0;border:1px solid;border-color:#f0f0f0 #696969 #696969 #f0f0f0"></div>
<div class="a" style="left:308px;top:340px;width:15px;height:29px;box-sizing:border-box;border:1px solid;border-color:#fff #a0a0a0 #a0a0a0 #fff"></div>
<div class="a" style="left:307px;top:438px;width:17px;height:17px;box-sizing:border-box;background:#f0f0f0;border:1px solid;border-color:#f0f0f0 #696969 #696969 #f0f0f0"></div>
<div class="a" style="left:308px;top:439px;width:15px;height:15px;box-sizing:border-box;border:1px solid;border-color:#fff #a0a0a0 #a0a0a0 #fff"></div>
<span class="t" style="left:238.10px;top:315.00px;font-size:12.6px;letter-spacing:0.392px;color:#fff;">3</span>
<span class="t" style="left:237.90px;top:333.00px;font-size:12.6px;letter-spacing:0.592px;">4</span>
<span class="t" style="left:238.10px;top:351.00px;font-size:12.6px;letter-spacing:0.392px;">5</span>
<span class="t" style="left:238.10px;top:369.00px;font-size:12.6px;letter-spacing:0.392px;">6</span>
<span class="t" style="left:238.10px;top:387.00px;font-size:12.6px;letter-spacing:0.392px;">7</span>
<span class="t" style="left:238.10px;top:405.00px;font-size:12.6px;letter-spacing:0.392px;">8</span>
<span class="t" style="left:238.30px;top:423.00px;font-size:12.6px;letter-spacing:0.196px;">12</span>
<span class="t" style="left:238.30px;top:441.00px;font-size:12.6px;letter-spacing:0.196px;">14</span>
<svg width="1440" height="900" viewBox="0 0 1440 900" style="left:0;top:0">
 <path d="M312 321.6h7l-3.5-3.8z M312 445.2h7l-3.5 3.8z" fill="#000"/>
 <!-- mouse cursor -->
 <path d="M308.5 300.2V316.8L312.2 313.5L315 319.2L317.5 318.1L315 312.7L320.2 312.2Z" fill="#fff" stroke="#000" stroke-width="1" stroke-linejoin="miter"/>
</svg>
<!-- ===== SCROLLBARS, SHEET TABS, STATUS BAR ===== -->
<div class="a" style="left:0;top:161px;width:1418px;height:1px;background:#8f8f8f"></div>
<div class="a" style="left:0;top:161px;width:1px;height:649px;background:#8f8f8f"></div>
<div class="a" style="left:1417px;top:161px;width:1px;height:649px;background:#8f8f8f"></div>
<div class="a" style="left:1422px;top:163px;width:15px;height:646px;background:#dadada"></div>
<div class="a" style="left:1422px;top:163px;width:15px;height:15px;box-sizing:border-box;background:#fff;border:1px solid #ababab"></div>
<div class="a" style="left:1422px;top:178px;width:15px;height:65px;box-sizing:border-box;background:#fff;border:1px solid #ababab"></div>
<div class="a" style="left:1422px;top:796px;width:15px;height:14px;box-sizing:border-box;background:#fff;border:1px solid #ababab"></div>
<div class="a" style="left:0;top:810px;width:1440px;height:28px;background:#e6e6e6"></div>
<div class="a" style="left:0;top:810px;width:1418px;height:1px;background:#ababab"></div>
<div class="a" style="left:0;top:838px;width:1440px;height:22px;background:#f3f2f1"></div>
<div class="a" style="left:0;top:838px;width:1440px;height:1px;background:#c8c8c8"></div>
<!-- active tab -->
<div class="a" style="left:488px;top:810px;width:108px;height:25px;box-sizing:border-box;background:#fff;border-left:1px solid #ababab;border-right:1px solid #ababab;border-bottom:2px solid #217346"></div>
<!-- h scroll -->
<div class="a" style="left:881px;top:817px;width:521px;height:15px;background:#dadada"></div>
<div class="a" style="left:881px;top:817px;width:16px;height:15px;box-sizing:border-box;background:#fff;border:1px solid #ababab"></div>
<div class="a" style="left:896px;top:817px;width:253px;height:15px;box-sizing:border-box;background:#fff;border:1px solid #ababab"></div>
<div class="a" style="left:1404px;top:817px;width:15px;height:15px;box-sizing:border-box;background:#fff;border:1px solid #ababab"></div>
<!-- status bar view buttons -->
<div class="a" style="left:1154px;top:839px;width:38px;height:21px;background:#c8c6c4"></div>
<svg width="1440" height="900" viewBox="0 0 1440 900" style="left:0;top:0">
 <path d="M1426 172.4h7l-3.5-4z M1426 801h7l-3.5 4z" fill="#6b6b6b"/>
 <path d="M890.4 820.6v7.4l-4-3.7z M1409.6 820.6v7.4l4-3.7z" fill="#6b6b6b"/>
 <path d="M31.4 820v7.4l-4.4-3.7z M55.6 820v7.4l4.4-3.7z" fill="#c2c2c2"/>
 <path d="M100.5 814V834 M246.5 814V834 M346.5 814V834" stroke="#a6a6a6" stroke-width="1"/>
 <g fill="#a6a6a6"><rect x="864" y="819" width="1.6" height="1.6"/><rect x="864" y="823" width="1.6" height="1.6"/><rect x="864" y="827" width="1.6" height="1.6"/></g>
 <g fill="none" stroke="#6b6b6b" stroke-width="1.1"><circle cx="636.8" cy="823.8" r="7.2"/><path d="M632.6 823.8H641 M636.8 819.6V828"/></g>
 <!-- status bar macro icon -->
 <g shape-rendering="crispEdges" fill="#5f5f5f"><path d="M9 847h1v8h-1z M9 854h12v1h-12z M20 843h1v12h-1z M15 843h6v2h-6z M11 848h2v1h-2z M14 848h2v1h-2z M17 848h2v1h-2z M11 850h2v1h-2z M14 850h2v1h-2z M17 850h2v1h-2z M11 852h2v1h-2z M14 852h2v1h-2z M17 852h2v1h-2z "/></g>
 <circle cx="10.8" cy="845" r="3.1" fill="#5f5f5f"/>
 <!-- view icons -->
 <g fill="none" stroke="#605e5c" stroke-width="1">
  <rect x="1166.5" y="842.5" width="12" height="12"/><path d="M1170.5 842.5V854.5 M1174.5 842.5V854.5 M1166.5 846.5H1178.5 M1166.5 850.5H1178.5"/>
  <rect x="1204.5" y="842.5" width="13" height="12"/><rect x="1207.5" y="845.5" width="7" height="6.5"/><path d="M1209 847.5H1213 M1209 849.5H1213"/>
  <rect x="1242.5" y="842.5" width="13" height="12"/><path d="M1246.5 842.5V848.5H1255.5 M1251 842.5V848.5"/>
  <path d="M1283 849.5H1383" stroke="#a19f9d"/>
 </g>
 <rect x="1331" y="843.6" width="4.6" height="11" fill="#605e5c"/>
 <path d="M1273.4 848.4h5.4v1.8h-5.4z M1386.2 848.4h7.4v1.8h-7.4z M1389 845.6h1.8v7.4h-1.8z" fill="#605e5c"/>
</svg>
<div class="a gl">
<span class="t" style="left:115.28px;top:817.00px;font-size:13px;letter-spacing:0.173px;color:#4a4a4a;">Verbruiksregistratie</span>
<span class="t" style="left:260.78px;top:817.00px;font-size:13px;letter-spacing:-0.091px;color:#4a4a4a;">Bestellingen</span>
<span class="t" style="left:359.98px;top:817.00px;font-size:13px;letter-spacing:-0.026px;color:#4a4a4a;">Onderdelen Beheer</span>
<span class="t" style="left:499.48px;top:817.00px;font-size:13px;letter-spacing:0.068px;color:#217346;font-weight:bold;">Inventarislijst</span>
<span class="t" style="left:1404.96px;top:844.00px;font-size:11px;letter-spacing:-0.240px;color:#605e5c;">100%</span>
</div>
<!-- ===== TASKBAR ===== -->
<div class="a" style="left:0;top:860px;width:1440px;height:40px;background:#080a13"></div>
<div class="a" style="left:343px;top:860px;width:48px;height:40px;background:#393c42"></div>
<div class="a" style="left:200px;top:898px;width:40px;height:2px;background:#76b9ed"></div>
<div class="a" style="left:343px;top:898px;width:48px;height:2px;background:#76b9ed"></div>
<svg width="1440" height="900" viewBox="0 0 1440 900" style="left:0;top:0">
 <!-- windows logo -->
 <path d="M15.8 874.2L22.4 873.3V879.4H15.8Z M23.2 873.2L32.2 871.9V879.4H23.2Z M15.8 880.2H22.4V886.3L15.8 885.4Z M23.2 880.2H32.2V887.8L23.2 886.5Z" fill="#fff"/>
 <!-- search -->
 <g fill="none" stroke="#fff" stroke-width="1.4"><circle cx="74.3" cy="877.8" r="5.6"/><path d="M70.4 882L64.2 888"/></g>
 <!-- task view -->
 <g fill="none" stroke="#fff" stroke-width="1.2"><path d="M112.8 871.8V874.2H122.8V871.8 M112.8 887.2V884.8H122.8V887.2 M126.4 872V887"/><rect x="112.8" y="877" width="10" height="5.2"/></g>
 <path d="M125 876.4h2.8v2.4h-2.8z" fill="#fff"/>
 <!-- edge -->
 <path d="M162 880.6C162 873.6 167 869.6 172.4 869.6C178.6 869.6 181.6 874.4 181.4 880.2H168.6C168.8 884.4 172.4 886 175.6 886C177.8 886 179.6 885.4 180.8 884.6V888.8C179 889.8 176.6 890.4 174 890.4C166.8 890.4 163.8 885.6 164.2 880.2C164.6 876.6 167 874.2 169.6 873.2C167.6 874.6 166.4 877 166.2 880.6 M168.8 877.4H175.8C175.8 875 174.6 873.4 172.4 873.4C170.2 873.4 169 875.2 168.8 877.4Z" fill="#1e7ad6" fill-rule="evenodd"/>
 <!-- explorer -->
 <path d="M209 871H216.2L217.8 872.8H230.5V875H209Z" fill="#f0c65c"/>
 <rect x="209" y="874" width="21.5" height="13.8" fill="#fbe29a"/>
 <path d="M210.2 872H215.4" stroke="#5aa7e8" stroke-width="1" fill="none"/>
 <path d="M212.8 889V880.5H227V889H223V884H217V889Z" fill="#3f97de"/>
 <path d="M212.8 880.5H227V882.6H212.8Z" fill="#62b8ee"/>
 <!-- store -->
 <path d="M257 873.6H280V888.8C280 890 279.2 890.8 278 890.8H259C257.8 890.8 257 890 257 888.8Z" fill="#fff"/>
 <path d="M264.6 874C264.6 866.2 273.6 866.2 273.6 874" fill="none" stroke="#fff" stroke-width="1.3"/>
 <path d="M266.8 874C266.8 869 271.4 869 271.4 874" fill="none" stroke="#cfcfcf" stroke-width="0.9"/>
 <rect x="263" y="876.8" width="5.2" height="5.2" fill="#f25022"/><rect x="269" y="876.8" width="5.2" height="5.2" fill="#7fba00"/>
 <rect x="263" y="882.8" width="5.2" height="5.2" fill="#00a4ef"/><rect x="269" y="882.8" width="5.2" height="5.2" fill="#ffb900"/>
 <!-- mail -->
 <path d="M305.8 875.8L318 869.8L330.3 875.8V889H305.8Z" fill="#fff"/>
 <path d="M306.6 876H329.6L325.2 885.6L319.4 881Z" fill="#080a13"/>
 <!-- excel -->
 <path d="M362.4 869H369.8V874.2H361V870.4C361 869.6 361.6 869 362.4 869Z" fill="#21a366"/>
 <path d="M369.8 869H377.6C378.4 869 379 869.6 379 870.4V874.2H369.8Z" fill="#33c481"/>
 <rect x="361" y="874.2" width="8.8" height="5.2" fill="#107c41"/><rect x="369.8" y="874.2" width="9.2" height="5.2" fill="#21a366"/>
 <rect x="361" y="879.4" width="8.8" height="5.2" fill="#185c37"/><rect x="369.8" y="879.4" width="9.2" height="5.2" fill="#107c41"/>
 <path d="M361 884.6H379V888.5C379 889.3 378.4 889.9 377.6 889.9H362.4C361.6 889.9 361 889.3 361 888.5Z" fill="#185c37"/>
 <rect x="354.9" y="873.9" width="12.5" height="12.1" rx="1.2" fill="#107c41"/>
 <path d="M358.2 876.6L364 883.4 M364 876.6L358.2 883.4" stroke="#fff" stroke-width="1.6" fill="none"/>
 <!-- people -->
 <g fill="none" stroke="#fff" stroke-width="1.2"><circle cx="1206.2" cy="875" r="2.7"/><circle cx="1200.6" cy="879.8" r="2.7"/><path d="M1196.2 887.2C1196.6 882.8 1204.6 882.8 1205 887.2 M1205.6 879.6C1207.6 879 1210 880.4 1210.2 883"/></g>
 <!-- caret -->
 <path d="M1233 883.2L1238.8 877.2L1244.6 883.2" fill="none" stroke="#fff" stroke-width="1.3"/>
 <!-- battery -->
 <g fill="none" stroke="#fff" stroke-width="1.1"><path d="M1262 876.6H1270.4V884H1259.6V880.4"/><path d="M1261.6 878.4H1268.6V882.4H1261.6Z" fill="#fff"/><path d="M1256 874.2V876.6 M1259 874.2V876.6 M1255.2 876.8H1259.8V879.4C1259.8 881 1255.2 881 1255.2 879.4Z M1257.5 880.8V885"/></g>
 <path d="M1270.6 878.6h1.2v3.4h-1.2z" fill="#fff"/>
 <!-- network -->
 <g fill="none" stroke="#fff" stroke-width="1.1"><path d="M1284.6 874.2H1294.6V883H1283.4 M1289 883V886.8 M1285.4 887H1292.8"/><rect x="1279.6" y="875.8" width="4.4" height="4.2"/><path d="M1281.8 880V887 M1280 877.4H1283.4"/></g>
 <!-- volume -->
 <g fill="none" stroke="#fff" stroke-width="1.1"><path d="M1303.2 877.4H1305.8L1309.4 874V885.4L1305.8 882H1303.2Z"/><path d="M1311.8 877.4C1312.8 878.8 1312.8 880.6 1311.8 882 M1314.2 875.6C1316 878 1316 881.4 1314.2 883.8 M1316.8 873.8C1319.4 877.2 1319.4 882.2 1316.8 885.6"/></g>
 <!-- notification -->
 <path d="M1399.6 872.6H1414.6V884.4H1409.8L1407.2 887.2L1404.6 884.4H1399.6Z" fill="none" stroke="#fff" stroke-width="1.2"/>
 <path d="M1435.5 860V900" stroke="#4a4c52" stroke-width="1"/>
</svg>
<div class="a gl">
<span class="t" style="left:1341.54px;top:866.00px;font-size:11.5px;letter-spacing:-0.312px;color:#fff;">16:10</span>
<span class="t" style="left:1332.04px;top:884.00px;font-size:11.5px;letter-spacing:0.072px;color:#fff;">5-6-2019</span>
</div>
</body>
</html>
